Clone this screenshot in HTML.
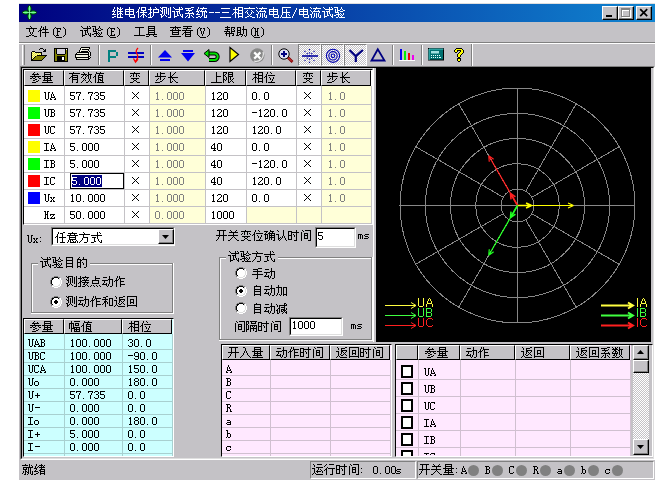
<!DOCTYPE html><html><head><meta charset="utf-8"><title>继电保护测试系统--三相交流电压/电流试验</title><style>
html,body{margin:0;padding:0;width:668px;height:486px;overflow:hidden;background:#fff;position:relative;font-family:"Liberation Sans",sans-serif}
div,svg,span{position:absolute;box-sizing:border-box}
svg{overflow:visible}
.g{shape-rendering:crispEdges}
.t{color:transparent;font:11px/13px "Liberation Sans",sans-serif;white-space:pre;overflow:hidden}
.t svg{left:0;top:0}
</style></head><body>

<div style="left:19px;top:3px;width:636px;height:477px;background:#c4c2c6"></div>
<div style="left:19px;top:3px;width:636px;height:1px;background:#dfdfdf"></div>
<div style="left:19px;top:4px;width:636px;height:18px;background:linear-gradient(to right,#000080,#1084d0)"></div>
<div class="t" style="left:112px;top:6px;width:234px;height:13px">继电保护测试系统--三相交流电压/电流试验<svg class="g" width="234" height="13"><path fill="#fff" d="M2 1h1v2h-1zM5 1h1v1h-1zM8 1h1v2h-1zM17 1h1v2h-1zM27 1h1v2h-1zM29 1h5v1h-5zM38 1h1v2h-1zM43 1h1v1h-1zM48 1h1v1h-1zM50 1h5v1h-5zM58 1h1v10h-1zM61 1h1v1h-1zM67 1h1v2h-1zM69 1h1v1h-1zM79 1h3v1h-3zM86 1h1v2h-1zM91 1h1v1h-1zM123 1h1v2h-1zM126 1h5v1h-5zM137 1h1v1h-1zM144 1h1v1h-1zM150 1h1v1h-1zM161 1h1v2h-1zM170 1h9v1h-9zM191 1h1v2h-1zM198 1h1v1h-1zM204 1h1v1h-1zM211 1h1v1h-1zM217 1h1v2h-1zM219 1h1v1h-1zM222 1h4v1h-4zM229 1h1v2h-1zM5 2h2v1h-2zM10 2h1v1h-1zM29 2h1v2h-1zM33 2h1v2h-1zM44 2h1v1h-1zM49 2h2v1h-2zM54 2h1v6h-1zM56 2h1v7h-1zM62 2h1v1h-1zM70 2h1v1h-1zM73 2h6v1h-6zM88 2h7v1h-7zM109 2h9v1h-9zM126 2h1v1h-1zM130 2h1v2h-1zM132 2h11v1h-11zM145 2h1v1h-1zM147 2h8v1h-8zM170 2h1v4h-1zM184 2h1v2h-1zM199 2h1v1h-1zM201 2h8v1h-8zM212 2h1v1h-1zM220 2h1v1h-1zM225 2h1v2h-1zM1 3h1v2h-1zM5 3h1v2h-1zM7 3h3v1h-3zM13 3h9v1h-9zM26 3h1v2h-1zM36 3h4v1h-4zM41 3h6v1h-6zM50 3h1v2h-1zM52 3h1v6h-1zM63 3h8v1h-8zM76 3h1v1h-1zM80 3h1v1h-1zM85 3h1v2h-1zM90 3h1v1h-1zM121 3h6v1h-6zM149 3h1v1h-1zM157 3h9v1h-9zM174 3h1v3h-1zM187 3h9v1h-9zM203 3h1v1h-1zM213 3h8v1h-8zM223 3h1v3h-1zM228 3h1v1h-1zM230 3h1v1h-1zM3 4h1v1h-1zM8 4h1v1h-1zM13 4h1v1h-1zM17 4h1v1h-1zM21 4h1v1h-1zM29 4h5v1h-5zM38 4h1v2h-1zM41 4h1v2h-1zM46 4h1v2h-1zM48 4h1v1h-1zM67 4h1v1h-1zM74 4h6v1h-6zM87 4h1v1h-1zM89 4h1v1h-1zM93 4h1v1h-1zM123 4h1v2h-1zM126 4h5v1h-5zM135 4h1v1h-1zM139 4h1v1h-1zM144 4h1v1h-1zM148 4h1v1h-1zM152 4h1v1h-1zM157 4h1v1h-1zM161 4h1v1h-1zM165 4h1v1h-1zM183 4h1v2h-1zM187 4h1v1h-1zM191 4h1v1h-1zM195 4h1v1h-1zM198 4h1v1h-1zM202 4h1v1h-1zM206 4h1v1h-1zM217 4h1v1h-1zM225 4h3v1h-3zM231 4h2v1h-2zM0 5h3v1h-3zM5 5h6v1h-6zM13 5h9v1h-9zM25 5h2v1h-2zM31 5h1v1h-1zM49 5h2v1h-2zM60 5h3v1h-3zM64 5h4v1h-4zM77 5h1v1h-1zM84 5h3v1h-3zM88 5h7v1h-7zM126 5h1v2h-1zM130 5h1v2h-1zM134 5h1v1h-1zM140 5h1v1h-1zM145 5h1v1h-1zM147 5h7v1h-7zM157 5h9v1h-9zM187 5h9v1h-9zM199 5h1v1h-1zM201 5h7v1h-7zM210 5h3v1h-3zM214 5h4v1h-4zM225 5h1v1h-1zM228 5h3v1h-3zM2 6h1v1h-1zM5 6h1v2h-1zM8 6h1v1h-1zM13 6h1v2h-1zM17 6h1v2h-1zM21 6h1v2h-1zM24 6h1v1h-1zM26 6h1v6h-1zM28 6h7v1h-7zM38 6h2v1h-2zM41 6h6v1h-6zM50 6h1v2h-1zM62 6h1v4h-1zM65 6h1v3h-1zM67 6h1v2h-1zM76 6h1v1h-1zM80 6h1v1h-1zM86 6h1v1h-1zM90 6h1v4h-1zM92 6h1v5h-1zM94 6h1v1h-1zM97 6h5v1h-5zM103 6h5v1h-5zM110 6h7v1h-7zM122 6h3v1h-3zM133 6h1v1h-1zM135 6h1v2h-1zM139 6h1v2h-1zM141 6h1v1h-1zM146 6h1v2h-1zM153 6h1v1h-1zM157 6h1v2h-1zM161 6h1v2h-1zM165 6h1v2h-1zM170 6h8v1h-8zM182 6h1v2h-1zM187 6h1v2h-1zM191 6h1v2h-1zM195 6h1v2h-1zM200 6h1v2h-1zM207 6h1v1h-1zM212 6h1v4h-1zM215 6h1v3h-1zM217 6h1v2h-1zM223 6h4v1h-4zM1 7h1v1h-1zM7 7h3v1h-3zM31 7h1v1h-1zM37 7h2v1h-2zM41 7h1v3h-1zM73 7h9v1h-9zM85 7h1v1h-1zM121 7h1v1h-1zM123 7h1v5h-1zM125 7h6v1h-6zM148 7h1v4h-1zM150 7h1v5h-1zM152 7h1v4h-1zM170 7h1v2h-1zM174 7h1v4h-1zM202 7h1v4h-1zM204 7h1v5h-1zM206 7h1v4h-1zM226 7h1v1h-1zM228 7h1v1h-1zM231 7h1v2h-1zM0 8h4v1h-4zM5 8h2v1h-2zM8 8h1v3h-1zM10 8h1v1h-1zM13 8h9v1h-9zM30 8h3v1h-3zM36 8h1v1h-1zM38 8h1v3h-1zM48 8h2v1h-2zM68 8h1v2h-1zM70 8h1v2h-1zM77 8h1v3h-1zM81 8h1v1h-1zM84 8h4v1h-4zM120 8h1v1h-1zM126 8h1v2h-1zM130 8h1v2h-1zM136 8h1v1h-1zM138 8h1v1h-1zM144 8h2v1h-2zM157 8h9v1h-9zM176 8h1v1h-1zM181 8h1v2h-1zM187 8h9v1h-9zM198 8h2v1h-2zM218 8h1v2h-1zM220 8h1v2h-1zM224 8h4v1h-4zM229 8h1v1h-1zM5 9h1v2h-1zM17 9h1v2h-1zM22 9h1v2h-1zM29 9h1v1h-1zM31 9h1v3h-1zM33 9h1v1h-1zM49 9h1v1h-1zM51 9h1v1h-1zM53 9h1v1h-1zM65 9h2v1h-2zM75 9h1v1h-1zM79 9h1v1h-1zM94 9h1v2h-1zM137 9h1v1h-1zM145 9h1v3h-1zM154 9h1v2h-1zM161 9h1v2h-1zM166 9h1v2h-1zM169 9h1v2h-1zM177 9h1v1h-1zM191 9h1v2h-1zM196 9h1v2h-1zM199 9h1v3h-1zM208 9h1v2h-1zM215 9h2v1h-2zM222 9h2v1h-2zM226 9h1v2h-1zM228 9h1v1h-1zM230 9h1v1h-1zM2 10h2v1h-2zM28 10h1v1h-1zM34 10h1v1h-1zM40 10h1v1h-1zM49 10h2v1h-2zM54 10h1v1h-1zM62 10h3v1h-3zM69 10h2v1h-2zM74 10h1v1h-1zM80 10h1v1h-1zM86 10h2v1h-2zM89 10h1v1h-1zM126 10h5v1h-5zM135 10h2v1h-2zM138 10h2v1h-2zM180 10h1v2h-1zM212 10h3v1h-3zM219 10h2v1h-2zM229 10h1v1h-1zM0 11h2v1h-2zM5 11h6v1h-6zM18 11h5v1h-5zM36 11h4v1h-4zM49 11h1v1h-1zM56 11h3v1h-3zM62 11h1v1h-1zM70 11h1v1h-1zM73 11h1v1h-1zM76 11h2v1h-2zM81 11h1v1h-1zM84 11h2v1h-2zM88 11h1v1h-1zM92 11h3v1h-3zM108 11h11v1h-11zM126 11h1v1h-1zM130 11h1v1h-1zM133 11h2v1h-2zM140 11h3v1h-3zM147 11h1v1h-1zM153 11h2v1h-2zM162 11h5v1h-5zM168 11h1v1h-1zM170 11h9v1h-9zM192 11h5v1h-5zM201 11h1v1h-1zM207 11h2v1h-2zM212 11h1v1h-1zM220 11h1v1h-1zM224 11h2v1h-2zM227 11h6v1h-6z"/></svg></div>
<svg style="left:21px;top:4px" width="17" height="17" viewBox="0 0 17 17"><g fill="#28e848" stroke="#003800" stroke-width="0.9"><path d="M8.5 1C10.8 3.5 10.8 6 8.5 8.5C6.2 6 6.2 3.5 8.5 1Z"/><path d="M8.5 8.5C10.8 11 10.8 13.5 8.5 16C6.2 13.5 6.2 11 8.5 8.5Z"/><path d="M1 8.5C3.5 6.2 6 6.2 8.5 8.5C6 10.8 3.5 10.8 1 8.5Z"/><path d="M8.5 8.5C11 6.2 13.5 6.2 16 8.5C13.5 10.8 11 10.8 8.5 8.5Z"/></g><path d="M8.5 2V15M2 8.5H15" stroke="#a0ffc0" stroke-width="0.7"/></svg>
<div style="left:602px;top:6px;width:16px;height:14px;background:#c4c2c6;border-top:1px solid #fff;border-left:1px solid #fff;border-right:1px solid #000;border-bottom:1px solid #000"></div>
<div style="left:603px;top:7px;width:14px;height:12px;border-right:1px solid #808080;border-bottom:1px solid #808080"></div>
<div style="left:618px;top:6px;width:16px;height:14px;background:#c4c2c6;border-top:1px solid #fff;border-left:1px solid #fff;border-right:1px solid #000;border-bottom:1px solid #000"></div>
<div style="left:619px;top:7px;width:14px;height:12px;border-right:1px solid #808080;border-bottom:1px solid #808080"></div>
<div style="left:636px;top:6px;width:16px;height:14px;background:#c4c2c6;border-top:1px solid #fff;border-left:1px solid #fff;border-right:1px solid #000;border-bottom:1px solid #000"></div>
<div style="left:637px;top:7px;width:14px;height:12px;border-right:1px solid #808080;border-bottom:1px solid #808080"></div>
<svg style="left:602px;top:6px" width="16" height="14" viewBox="0 0 16 14"><rect x="4" y="9" width="6" height="2" fill="#000"/></svg>
<svg style="left:618px;top:6px" width="16" height="14" viewBox="0 0 16 14"><g fill="none" stroke="#fff" shape-rendering="crispEdges"><rect x="4.5" y="4.5" width="8" height="7"/></g><g fill="none" stroke="#808080" shape-rendering="crispEdges"><rect x="3.5" y="3.5" width="8" height="7"/><path d="M3 2.5H12"/></g></svg>
<svg style="left:636px;top:6px" width="16" height="14" viewBox="0 0 16 14"><path d="M4.2 3.2L11.2 10.2M11.2 3.2L4.2 10.2" stroke="#000" stroke-width="1.7"/></svg>
<div class="t" style="left:26px;top:25px;width:42px;height:13px">文件(F)<svg class="g" width="42" height="13"><path fill="#000" d="M4 1h1v1h-1zM15 1h1v2h-1zM19 1h1v3h-1zM5 2h1v1h-1zM17 2h1v2h-1zM29 2h1v1h-1zM37 2h1v1h-1zM0 3h11v1h-11zM14 3h1v2h-1zM28 3h1v1h-1zM30 3h5v1h-5zM38 3h1v1h-1zM3 4h1v3h-1zM7 4h1v3h-1zM16 4h6v1h-6zM27 4h1v6h-1zM31 4h1v2h-1zM34 4h1v1h-1zM39 4h1v6h-1zM13 5h3v1h-3zM19 5h1v2h-1zM12 6h1v1h-1zM14 6h1v6h-1zM31 6h3v1h-3zM4 7h1v2h-1zM6 7h1v2h-1zM16 7h7v1h-7zM31 7h1v3h-1zM19 8h1v4h-1zM5 9h1v1h-1zM3 10h2v1h-2zM6 10h2v1h-2zM28 10h1v1h-1zM30 10h3v1h-3zM38 10h1v1h-1zM0 11h3v1h-3zM8 11h3v1h-3zM29 11h1v1h-1zM37 11h1v1h-1z"/></svg></div>
<div class="t" style="left:80px;top:25px;width:42px;height:13px">试验(E)<svg class="g" width="42" height="13"><path fill="#000" d="M1 1h1v1h-1zM7 1h1v2h-1zM9 1h1v1h-1zM12 1h4v1h-4zM19 1h1v2h-1zM2 2h1v1h-1zM10 2h1v1h-1zM15 2h1v2h-1zM29 2h1v1h-1zM37 2h1v1h-1zM3 3h8v1h-8zM13 3h1v3h-1zM18 3h1v1h-1zM20 3h1v1h-1zM28 3h1v1h-1zM30 3h5v1h-5zM38 3h1v1h-1zM7 4h1v1h-1zM15 4h3v1h-3zM21 4h2v1h-2zM27 4h1v6h-1zM31 4h1v2h-1zM34 4h1v1h-1zM39 4h1v6h-1zM0 5h3v1h-3zM4 5h4v1h-4zM15 5h1v1h-1zM18 5h3v1h-3zM2 6h1v4h-1zM5 6h1v3h-1zM7 6h1v2h-1zM13 6h4v1h-4zM31 6h3v1h-3zM16 7h1v1h-1zM18 7h1v1h-1zM21 7h1v2h-1zM31 7h1v3h-1zM8 8h1v2h-1zM10 8h1v2h-1zM14 8h4v1h-4zM19 8h1v1h-1zM5 9h2v1h-2zM12 9h2v1h-2zM16 9h1v2h-1zM18 9h1v1h-1zM20 9h1v1h-1zM34 9h1v1h-1zM2 10h3v1h-3zM9 10h2v1h-2zM19 10h1v1h-1zM28 10h1v1h-1zM30 10h5v1h-5zM38 10h1v1h-1zM2 11h1v1h-1zM10 11h1v1h-1zM14 11h2v1h-2zM17 11h6v1h-6zM29 11h1v1h-1zM37 11h1v1h-1z"/></svg></div>
<div class="t" style="left:134px;top:25px;width:24px;height:13px">工具<svg class="g" width="24" height="13"><path fill="#000" d="M14 1h7v1h-7zM1 2h9v1h-9zM14 2h1v1h-1zM20 2h1v1h-1zM5 3h1v7h-1zM14 3h7v1h-7zM14 4h1v1h-1zM20 4h1v1h-1zM14 5h7v1h-7zM14 6h1v1h-1zM20 6h1v1h-1zM14 7h7v1h-7zM14 8h1v1h-1zM20 8h1v1h-1zM12 9h11v1h-11zM0 10h11v1h-11zM15 10h1v1h-1zM19 10h1v1h-1zM12 11h3v1h-3zM20 11h3v1h-3z"/></svg></div>
<div class="t" style="left:170px;top:25px;width:42px;height:13px">查看(V)<svg class="g" width="42" height="13"><path fill="#000" d="M5 1h1v1h-1zM13 1h9v1h-9zM0 2h11v1h-11zM17 2h1v1h-1zM29 2h1v1h-1zM37 2h1v1h-1zM3 3h1v1h-1zM5 3h1v2h-1zM7 3h1v1h-1zM13 3h8v1h-8zM28 3h1v1h-1zM30 3h2v1h-2zM33 3h2v1h-2zM38 3h1v1h-1zM2 4h1v1h-1zM8 4h1v1h-1zM16 4h1v1h-1zM27 4h1v6h-1zM30 4h1v2h-1zM34 4h1v2h-1zM39 4h1v6h-1zM0 5h11v1h-11zM12 5h11v1h-11zM2 6h1v1h-1zM8 6h1v1h-1zM15 6h1v1h-1zM20 6h1v1h-1zM31 6h1v3h-1zM33 6h1v3h-1zM2 7h7v1h-7zM14 7h7v1h-7zM2 8h1v1h-1zM8 8h1v1h-1zM13 8h1v1h-1zM15 8h1v1h-1zM20 8h1v1h-1zM2 9h7v1h-7zM12 9h1v1h-1zM15 9h6v1h-6zM32 9h1v2h-1zM15 10h1v1h-1zM20 10h1v1h-1zM28 10h1v1h-1zM38 10h1v1h-1zM0 11h11v1h-11zM15 11h6v1h-6zM29 11h1v1h-1zM37 11h1v1h-1z"/></svg></div>
<div class="t" style="left:224px;top:25px;width:42px;height:13px">帮助(H)<svg class="g" width="42" height="13"><path fill="#000" d="M3 1h1v1h-1zM19 1h1v3h-1zM1 2h5v1h-5zM7 2h4v1h-4zM13 2h4v1h-4zM29 2h1v1h-1zM37 2h1v1h-1zM3 3h1v1h-1zM7 3h1v3h-1zM10 3h1v1h-1zM13 3h1v2h-1zM16 3h1v2h-1zM28 3h1v1h-1zM30 3h2v1h-2zM33 3h2v1h-2zM38 3h1v1h-1zM1 4h5v1h-5zM9 4h1v1h-1zM18 4h5v1h-5zM27 4h1v6h-1zM31 4h1v2h-1zM33 4h1v2h-1zM39 4h1v6h-1zM3 5h1v1h-1zM10 5h1v1h-1zM13 5h4v1h-4zM19 5h1v4h-1zM22 5h1v6h-1zM0 6h6v1h-6zM7 6h4v1h-4zM13 6h1v1h-1zM16 6h1v1h-1zM31 6h3v1h-3zM2 7h1v1h-1zM5 7h1v1h-1zM7 7h1v1h-1zM13 7h4v1h-4zM31 7h1v3h-1zM33 7h1v3h-1zM1 8h9v1h-9zM13 8h1v2h-1zM16 8h1v1h-1zM2 9h1v2h-1zM5 9h1v3h-1zM9 9h1v1h-1zM15 9h4v1h-4zM8 10h2v1h-2zM12 10h3v1h-3zM18 10h1v1h-1zM20 10h1v1h-1zM28 10h1v1h-1zM30 10h2v1h-2zM33 10h2v1h-2zM38 10h1v1h-1zM17 11h1v1h-1zM21 11h1v1h-1zM29 11h1v1h-1zM37 11h1v1h-1z"/></svg></div>
<div style="left:56px;top:37px;width:6px;height:1px;background:#000"></div>
<div style="left:110px;top:37px;width:6px;height:1px;background:#000"></div>
<div style="left:200px;top:37px;width:6px;height:1px;background:#000"></div>
<div style="left:254px;top:37px;width:6px;height:1px;background:#000"></div>
<div style="left:19px;top:42px;width:636px;height:1px;background:#808080"></div>
<div style="left:19px;top:43px;width:636px;height:1px;background:#fff"></div>
<div style="left:22px;top:45px;width:3px;height:20px;border-left:1px solid #fff;border-right:1px solid #808080"></div>
<div style="left:98px;top:45px;width:2px;height:20px;border-left:1px solid #808080;border-right:1px solid #fff"></div>
<div style="left:150px;top:45px;width:2px;height:20px;border-left:1px solid #808080;border-right:1px solid #fff"></div>
<div style="left:271px;top:45px;width:2px;height:20px;border-left:1px solid #808080;border-right:1px solid #fff"></div>
<div style="left:392px;top:45px;width:2px;height:20px;border-left:1px solid #808080;border-right:1px solid #fff"></div>
<div style="left:421px;top:45px;width:2px;height:20px;border-left:1px solid #808080;border-right:1px solid #fff"></div>
<div style="left:298px;top:44px;width:23px;height:22px;border-top:1px solid #808080;border-left:1px solid #808080;border-right:1px solid #fff;border-bottom:1px solid #fff;background-color:#e0e0e0;background-image:repeating-conic-gradient(#c4c2c6 0 25%,#fff 0 50%);background-size:2px 2px"></div>
<div style="left:321px;top:44px;width:23px;height:22px;border-top:1px solid #808080;border-left:1px solid #808080;border-right:1px solid #fff;border-bottom:1px solid #fff;background-color:#e0e0e0;background-image:repeating-conic-gradient(#c4c2c6 0 25%,#fff 0 50%);background-size:2px 2px"></div>
<div style="left:344px;top:44px;width:23px;height:22px;border-top:1px solid #808080;border-left:1px solid #808080;border-right:1px solid #fff;border-bottom:1px solid #fff;background-color:#e0e0e0;background-image:repeating-conic-gradient(#c4c2c6 0 25%,#fff 0 50%);background-size:2px 2px"></div>
<svg class="g" style="left:31px;top:47px" width="16" height="14"><path fill="#000" d="M9 1h3v1h-3zM8 2h1v1h-1zM12 2h1v1h-1zM14 2h1v1h-1zM13 3h2v1h-2zM1 4h3v1h-3zM12 4h3v1h-3zM0 5h1v1h-1zM4 5h7v1h-7zM0 6h1v1h-1zM10 6h1v1h-1zM0 7h1v1h-1zM10 7h1v1h-1zM0 8h1v1h-1zM6 8h10v1h-10zM0 9h1v1h-1zM4 9h1v1h-1zM14 9h1v1h-1zM0 10h1v1h-1zM3 10h1v1h-1zM13 10h1v1h-1zM0 11h1v1h-1zM2 11h1v1h-1zM12 11h1v1h-1zM0 12h2v1h-2zM11 12h1v1h-1zM0 13h11v1h-11z"/><path fill="#ffffa0" d="M1 5h1v1h-1zM3 5h1v1h-1zM2 6h1v1h-1zM4 6h1v1h-1zM6 6h1v1h-1zM8 6h1v1h-1zM1 7h1v1h-1zM3 7h1v1h-1zM5 7h1v1h-1zM7 7h1v1h-1zM9 7h1v1h-1zM2 8h1v1h-1zM4 8h1v1h-1zM1 9h1v1h-1zM3 9h1v1h-1zM2 10h1v1h-1zM1 11h1v1h-1z"/><path fill="#e0e040" d="M2 5h1v1h-1zM1 6h1v1h-1zM3 6h1v1h-1zM5 6h1v1h-1zM7 6h1v1h-1zM9 6h1v1h-1zM2 7h1v1h-1zM4 7h1v1h-1zM6 7h1v1h-1zM8 7h1v1h-1zM1 8h1v1h-1zM3 8h1v1h-1zM5 8h1v1h-1zM2 9h1v1h-1zM1 10h1v1h-1z"/><path fill="#808000" d="M5 9h9v1h-9zM4 10h9v1h-9zM3 11h9v1h-9zM2 12h9v1h-9z"/></svg>
<svg class="g" style="left:54px;top:48px" width="14" height="14"><path fill="#000" d="M0 0h14v1h-14zM0 1h1v1h-1zM2 1h1v1h-1zM11 1h1v1h-1zM13 1h1v1h-1zM0 2h1v1h-1zM2 2h1v1h-1zM11 2h1v1h-1zM13 2h1v1h-1zM0 3h1v1h-1zM2 3h1v1h-1zM11 3h1v1h-1zM13 3h1v1h-1zM0 4h1v1h-1zM2 4h1v1h-1zM11 4h1v1h-1zM13 4h1v1h-1zM0 5h1v1h-1zM2 5h1v1h-1zM11 5h1v1h-1zM13 5h1v1h-1zM0 6h1v1h-1zM3 6h8v1h-8zM13 6h1v1h-1zM0 7h1v1h-1zM13 7h1v1h-1zM0 8h1v1h-1zM3 8h8v1h-8zM13 8h1v1h-1zM0 9h1v1h-1zM3 9h5v1h-5zM10 9h1v1h-1zM13 9h1v1h-1zM0 10h1v1h-1zM3 10h5v1h-5zM10 10h1v1h-1zM13 10h1v1h-1zM0 11h1v1h-1zM3 11h5v1h-5zM10 11h1v1h-1zM13 11h1v1h-1zM0 12h1v1h-1zM3 12h8v1h-8zM13 12h1v1h-1zM0 13h14v1h-14z"/><path fill="#808000" d="M1 1h1v1h-1zM1 2h1v1h-1zM12 2h1v1h-1zM1 3h1v1h-1zM12 3h1v1h-1zM1 4h1v1h-1zM12 4h1v1h-1zM1 5h1v1h-1zM12 5h1v1h-1zM1 6h2v1h-2zM11 6h2v1h-2zM1 7h12v1h-12zM1 8h2v1h-2zM11 8h2v1h-2zM1 9h2v1h-2zM11 9h2v1h-2zM1 10h2v1h-2zM11 10h2v1h-2zM1 11h2v1h-2zM11 11h2v1h-2zM1 12h2v1h-2zM11 12h2v1h-2z"/><path fill="#d4d0dc" d="M3 1h8v1h-8zM3 2h8v1h-8zM3 3h8v1h-8zM3 4h8v1h-8zM3 5h8v1h-8z"/><path fill="#fff" d="M12 1h1v1h-1zM8 9h2v1h-2zM8 10h2v1h-2zM8 11h2v1h-2z"/></svg>
<svg class="g" style="left:75px;top:47px" width="16" height="13"><path fill="#000" d="M6 0h9v1h-9zM5 1h1v1h-1zM14 1h1v1h-1zM5 2h1v1h-1zM7 2h7v1h-7zM4 3h1v1h-1zM13 3h1v1h-1zM4 4h1v1h-1zM6 4h7v1h-7zM14 4h1v1h-1zM2 5h12v1h-12zM15 5h1v1h-1zM1 6h1v1h-1zM13 6h1v1h-1zM15 6h1v1h-1zM0 7h14v1h-14zM15 7h1v1h-1zM0 8h1v1h-1zM13 8h1v1h-1zM15 8h1v1h-1zM0 9h1v1h-1zM13 9h2v1h-2zM0 10h14v1h-14zM15 10h1v1h-1zM1 11h1v1h-1zM13 11h2v1h-2zM1 12h13v1h-13z"/><path fill="#f0f0e0" d="M6 1h8v1h-8zM6 2h1v1h-1zM5 3h8v1h-8zM5 4h1v1h-1zM13 4h1v1h-1zM14 5h1v1h-1zM2 6h11v1h-11zM14 6h1v1h-1zM14 7h1v1h-1zM1 8h12v1h-12zM14 8h1v1h-1zM1 9h12v1h-12zM14 10h1v1h-1zM2 11h11v1h-11z"/></svg>
<svg style="left:104px;top:47px" width="16" height="16" viewBox="0 0 16 16"><path fill="#008080" d="M4 3h8v2h-8zM4 5h2v10h-2zM12 5h2v4h-2zM6 9h6v2h-6z"/></svg>
<svg style="left:127px;top:47px" width="18" height="16" viewBox="0 0 18 16"><path fill="#0000c0" d="M1 5h16v2h-16zM1 9h16v2h-16z"/><path d="M11 1Q8 4 10 7Q12 10 8.5 14.5" stroke="#f00" stroke-width="1.3" fill="none"/><path d="M6.5 11.5L8.5 15L11 12" stroke="#f00" stroke-width="1.3" fill="none"/></svg>
<svg style="left:157px;top:47px" width="16" height="16" viewBox="0 0 16 16"><path fill="#0000f0" d="M1 10.5L8 3L15 10.5z"/><rect x="3" y="12" width="10" height="2" fill="#0000f0"/></svg>
<svg style="left:180px;top:47px" width="16" height="16" viewBox="0 0 16 16"><path fill="#0000f0" d="M1 6L15 6L8 14.5z"/><rect x="3" y="3" width="10" height="2" fill="#0000f0"/></svg>
<svg style="left:203px;top:47px" width="17" height="16" viewBox="0 0 17 16"><path d="M6 6.5H11.5A3.2 3.2 0 0 1 11.5 12.9H6" stroke="#000" stroke-width="4" fill="none"/><path d="M6 6.5H11.5A3.2 3.2 0 0 1 11.5 12.9H6" stroke="#00e000" stroke-width="2" fill="none"/><path d="M1 6.5L6 2.5V10.5Z" fill="#00e000" stroke="#000" stroke-width="1"/></svg>
<svg style="left:228px;top:46px" width="12" height="17" viewBox="0 0 12 17"><path d="M2 1.5V15.5L10.5 8.5Z" fill="#ffff00" stroke="#000" stroke-width="1.2"/></svg>
<svg style="left:249px;top:47px" width="17" height="17" viewBox="0 0 17 17"><circle cx="8.3" cy="8.5" r="7.2" fill="#888"/><path d="M14 5A7.2 7.2 0 0 1 5 14" stroke="#e8e8e8" stroke-width="1.2" fill="none"/><path d="M5.2 5.4L11.4 11.6M11.4 5.4L5.2 11.6" stroke="#fff" stroke-width="2.2"/></svg>
<svg style="left:277px;top:47px" width="17" height="17" viewBox="0 0 17 17"><path d="M10.5 10L15.5 15" stroke="#800000" stroke-width="2.6"/><path d="M11 10.5L15 14.5" stroke="#ff6060" stroke-width="0.8"/><circle cx="7" cy="7" r="5.2" fill="#e0e0f4" stroke="#000" stroke-width="1"/><path fill="#000080" d="M6 4h2v6h-2zM4 6h6v2h-6z"/></svg>
<svg style="left:299px;top:45px" width="21" height="20" viewBox="0 0 21 20"><path d="M3 11H19" stroke="#0000a0" stroke-width="1.6"/><path d="M10.5 4V18M5.5 6L15.5 16M15.5 6L5.5 16" stroke="#0000a0" stroke-width="1.2" stroke-dasharray="1.2 2" fill="none"/></svg>
<svg style="left:322px;top:45px" width="21" height="20" viewBox="0 0 21 20"><g stroke="#0000b0" fill="none" stroke-width="1.1"><circle cx="11" cy="10.8" r="6.6"/><circle cx="11" cy="10.8" r="4.2"/><circle cx="11" cy="10.8" r="1.8"/></g></svg>
<svg style="left:345px;top:45px" width="21" height="20" viewBox="0 0 21 20"><path d="M4.5 5L10.8 11.2L17.9 5M10.8 11.2V17" stroke="#000080" stroke-width="2.2" fill="none"/></svg>
<svg style="left:369px;top:46px" width="18" height="17" viewBox="0 0 18 17"><path d="M8.8 3.2L2.5 14.5H15.5Z" stroke="#000080" stroke-width="1.8" fill="none" stroke-linejoin="miter"/></svg>
<svg style="left:398px;top:47px" width="18" height="16" viewBox="0 0 18 16"><rect x="2" y="2" width="2" height="11" fill="#0000f0"/><rect x="6" y="4" width="2" height="9" fill="#00f000"/><rect x="10" y="6" width="2" height="7" fill="#f00000"/><rect x="14" y="8" width="2" height="5" fill="#f000f0"/><rect x="1" y="13" width="16" height="1" fill="#fff"/></svg>
<svg style="left:428px;top:48px" width="17" height="14" viewBox="0 0 17 14"><rect x="0.5" y="0.5" width="15" height="11.5" fill="#007070" stroke="#000"/><path d="M1 1H15.5" stroke="#50d0d0"/><path d="M1 1V12" stroke="#50d0d0"/><rect x="3" y="3" width="8" height="2.5" fill="#a0e0e0"/><g fill="#e0ffff"><rect x="3" y="7" width="1" height="1"/><rect x="5" y="7" width="1" height="1"/><rect x="7" y="7" width="1" height="1"/><rect x="9" y="7" width="1" height="1"/><rect x="11" y="7" width="1" height="1"/><rect x="3" y="9" width="1" height="1"/><rect x="5" y="9" width="1" height="1"/><rect x="7" y="9" width="1" height="1"/><rect x="9" y="9" width="1" height="1"/><rect x="11" y="9" width="2" height="1"/></g></svg>
<svg class="g" style="left:454px;top:48px" width="10" height="14"><path fill="#000" d="M2 0h6v1h-6zM1 1h1v1h-1zM8 1h1v1h-1zM0 2h1v1h-1zM3 2h4v1h-4zM9 2h1v1h-1zM0 3h1v1h-1zM3 3h1v1h-1zM6 3h1v1h-1zM9 3h1v1h-1zM1 4h2v1h-2zM5 4h1v1h-1zM9 4h1v1h-1zM4 5h1v1h-1zM8 5h1v1h-1zM3 6h1v1h-1zM7 6h1v1h-1zM3 7h1v1h-1zM6 7h1v1h-1zM3 8h1v1h-1zM6 8h1v1h-1zM4 9h2v1h-2zM3 10h4v1h-4zM3 11h1v1h-1zM6 11h1v1h-1zM3 12h1v1h-1zM6 12h1v1h-1zM4 13h2v1h-2z"/><path fill="#ffff00" d="M2 1h6v1h-6zM1 2h2v1h-2zM7 2h2v1h-2zM1 3h2v1h-2zM7 3h2v1h-2zM6 4h3v1h-3zM5 5h3v1h-3zM4 6h3v1h-3zM4 7h2v1h-2zM4 8h2v1h-2zM4 11h2v1h-2zM4 12h2v1h-2z"/></svg>
<div style="left:471px;top:44px;width:2px;height:22px;border-left:1px solid #808080;border-right:1px solid #fff"></div>
<div style="left:20px;top:66px;width:635px;height:394px;border-left:1px solid #808080;border-top:1px solid #808080;border-right:1px solid #fff;border-bottom:1px solid #fff"></div>
<div style="left:21px;top:67px;width:633px;height:392px;border-left:1px solid #000;border-top:1px solid #000;border-right:1px solid #dfdfdf;border-bottom:1px solid #dfdfdf"></div>
<div style="left:23px;top:69px;width:350px;height:156px;background:#fff;border-left:1px solid #000;border-top:1px solid #000;border-right:1px solid #fff;border-bottom:1px solid #fff"></div>
<div style="left:24px;top:70px;width:40px;height:16px;background:#c4c2c6;border-left:1px solid #fff;border-top:1px solid #fff;border-right:1px solid #000;border-bottom:1px solid #000"></div>
<div class="t" style="left:30px;top:71px;width:24px;height:13px">参量<svg class="g" width="24" height="13"><path fill="#000" d="M4 1h1v1h-1zM14 1h7v1h-7zM3 2h1v1h-1zM7 2h1v1h-1zM14 2h1v1h-1zM20 2h1v1h-1zM2 3h7v1h-7zM14 3h7v1h-7zM4 4h1v1h-1zM14 4h1v1h-1zM20 4h1v1h-1zM0 5h11v1h-11zM12 5h11v1h-11zM2 6h1v1h-1zM5 6h1v1h-1zM8 6h1v1h-1zM14 6h1v1h-1zM17 6h1v1h-1zM20 6h1v1h-1zM0 7h2v1h-2zM3 7h2v1h-2zM9 7h2v1h-2zM14 7h7v1h-7zM5 8h2v1h-2zM14 8h1v1h-1zM17 8h1v1h-1zM20 8h1v1h-1zM3 9h2v1h-2zM8 9h1v1h-1zM13 9h9v1h-9zM6 10h2v1h-2zM17 10h1v1h-1zM2 11h4v1h-4zM12 11h11v1h-11z"/></svg></div>
<div style="left:64px;top:70px;width:60px;height:16px;background:#c4c2c6;border-left:1px solid #fff;border-top:1px solid #fff;border-right:1px solid #000;border-bottom:1px solid #000"></div>
<div class="t" style="left:69px;top:71px;width:36px;height:13px">有效值<svg class="g" width="36" height="13"><path fill="#000" d="M4 1h1v1h-1zM14 1h1v1h-1zM19 1h1v2h-1zM27 1h1v1h-1zM31 1h1v1h-1zM0 2h11v1h-11zM15 2h1v1h-1zM27 2h8v1h-8zM3 3h1v1h-1zM12 3h6v1h-6zM19 3h4v1h-4zM26 3h1v2h-1zM30 3h1v1h-1zM3 4h6v1h-6zM14 4h1v1h-1zM16 4h1v1h-1zM18 4h2v1h-2zM21 4h1v4h-1zM29 4h5v1h-5zM2 5h2v1h-2zM8 5h1v1h-1zM13 5h1v1h-1zM17 5h1v1h-1zM19 5h1v3h-1zM25 5h2v1h-2zM29 5h1v1h-1zM33 5h1v1h-1zM1 6h1v1h-1zM3 6h6v1h-6zM12 6h1v1h-1zM16 6h1v2h-1zM24 6h1v1h-1zM26 6h1v6h-1zM29 6h5v1h-5zM0 7h1v1h-1zM3 7h1v1h-1zM8 7h1v1h-1zM14 7h1v1h-1zM29 7h1v1h-1zM33 7h1v2h-1zM3 8h6v1h-6zM15 8h1v1h-1zM20 8h1v2h-1zM29 8h3v1h-3zM3 9h1v3h-1zM8 9h1v2h-1zM14 9h1v1h-1zM16 9h1v1h-1zM29 9h1v2h-1zM31 9h3v1h-3zM13 10h1v1h-1zM19 10h1v1h-1zM21 10h1v1h-1zM33 10h1v1h-1zM7 11h2v1h-2zM12 11h1v1h-1zM17 11h2v1h-2zM22 11h1v1h-1zM28 11h7v1h-7z"/></svg></div>
<div style="left:124px;top:70px;width:25px;height:16px;background:#c4c2c6;border-left:1px solid #fff;border-top:1px solid #fff;border-right:1px solid #000;border-bottom:1px solid #000"></div>
<div class="t" style="left:129px;top:71px;width:12px;height:13px">变<svg class="g" width="12" height="13"><path fill="#000" d="M5 1h1v1h-1zM1 2h10v1h-10zM4 3h1v3h-1zM7 3h1v3h-1zM2 4h1v1h-1zM9 4h1v1h-1zM1 5h1v1h-1zM10 5h1v1h-1zM2 7h8v1h-8zM4 8h1v1h-1zM7 8h1v1h-1zM5 9h2v1h-2zM4 10h1v1h-1zM7 10h1v1h-1zM1 11h3v1h-3zM8 11h3v1h-3z"/></svg></div>
<div style="left:149px;top:70px;width:56px;height:16px;background:#c4c2c6;border-left:1px solid #fff;border-top:1px solid #fff;border-right:1px solid #000;border-bottom:1px solid #000"></div>
<div class="t" style="left:155px;top:71px;width:24px;height:13px">步长<svg class="g" width="24" height="13"><path fill="#000" d="M5 1h1v1h-1zM15 1h1v4h-1zM20 1h1v1h-1zM2 2h1v3h-1zM5 2h5v1h-5zM19 2h1v1h-1zM5 3h1v2h-1zM18 3h1v1h-1zM17 4h1v1h-1zM0 5h11v1h-11zM15 5h2v1h-2zM5 6h1v3h-1zM13 6h10v1h-10zM3 7h1v1h-1zM9 7h1v1h-1zM15 7h1v4h-1zM17 7h1v1h-1zM2 8h1v1h-1zM8 8h1v1h-1zM18 8h1v1h-1zM1 9h1v1h-1zM7 9h1v1h-1zM19 9h1v1h-1zM5 10h2v1h-2zM17 10h1v1h-1zM20 10h1v1h-1zM0 11h5v1h-5zM15 11h2v1h-2zM21 11h2v1h-2z"/></svg></div>
<div style="left:205px;top:70px;width:41px;height:16px;background:#c4c2c6;border-left:1px solid #fff;border-top:1px solid #fff;border-right:1px solid #000;border-bottom:1px solid #000"></div>
<div class="t" style="left:211px;top:71px;width:24px;height:13px">上限<svg class="g" width="24" height="13"><path fill="#000" d="M5 1h1v4h-1zM12 1h4v1h-4zM17 1h5v1h-5zM12 2h1v2h-1zM15 2h1v1h-1zM17 2h1v1h-1zM21 2h1v1h-1zM14 3h1v1h-1zM17 3h5v1h-5zM12 4h2v1h-2zM17 4h1v1h-1zM21 4h1v1h-1zM5 5h5v1h-5zM12 5h1v3h-1zM14 5h1v1h-1zM17 5h5v1h-5zM5 6h1v5h-1zM15 6h1v3h-1zM17 6h1v5h-1zM19 6h1v3h-1zM22 7h1v1h-1zM12 8h2v1h-2zM21 8h1v1h-1zM12 9h1v3h-1zM14 9h1v1h-1zM20 9h1v1h-1zM19 10h1v1h-1zM21 10h1v1h-1zM0 11h11v1h-11zM17 11h2v1h-2zM22 11h1v1h-1z"/></svg></div>
<div style="left:246px;top:70px;width:50px;height:16px;background:#c4c2c6;border-left:1px solid #fff;border-top:1px solid #fff;border-right:1px solid #000;border-bottom:1px solid #000"></div>
<div class="t" style="left:252px;top:71px;width:24px;height:13px">相位<svg class="g" width="24" height="13"><path fill="#000" d="M3 1h1v2h-1zM6 1h5v1h-5zM15 1h1v2h-1zM18 1h1v1h-1zM6 2h1v1h-1zM10 2h1v2h-1zM19 2h1v1h-1zM1 3h6v1h-6zM14 3h1v2h-1zM3 4h1v2h-1zM6 4h5v1h-5zM16 4h7v1h-7zM6 5h1v2h-1zM10 5h1v2h-1zM13 5h2v1h-2zM2 6h3v1h-3zM12 6h1v1h-1zM14 6h1v6h-1zM17 6h1v1h-1zM21 6h1v2h-1zM1 7h1v1h-1zM3 7h1v5h-1zM5 7h6v1h-6zM18 7h1v2h-1zM0 8h1v1h-1zM6 8h1v2h-1zM10 8h1v2h-1zM20 8h1v2h-1zM6 10h5v1h-5zM19 10h1v1h-1zM6 11h1v1h-1zM10 11h1v1h-1zM16 11h7v1h-7z"/></svg></div>
<div style="left:296px;top:70px;width:25px;height:16px;background:#c4c2c6;border-left:1px solid #fff;border-top:1px solid #fff;border-right:1px solid #000;border-bottom:1px solid #000"></div>
<div class="t" style="left:302px;top:71px;width:12px;height:13px">变<svg class="g" width="12" height="13"><path fill="#000" d="M5 1h1v1h-1zM1 2h10v1h-10zM4 3h1v3h-1zM7 3h1v3h-1zM2 4h1v1h-1zM9 4h1v1h-1zM1 5h1v1h-1zM10 5h1v1h-1zM2 7h8v1h-8zM4 8h1v1h-1zM7 8h1v1h-1zM5 9h2v1h-2zM4 10h1v1h-1zM7 10h1v1h-1zM1 11h3v1h-3zM8 11h3v1h-3z"/></svg></div>
<div style="left:321px;top:70px;width:50px;height:16px;background:#c4c2c6;border-left:1px solid #fff;border-top:1px solid #fff;border-right:1px solid #000;border-bottom:1px solid #000"></div>
<div class="t" style="left:327px;top:71px;width:24px;height:13px">步长<svg class="g" width="24" height="13"><path fill="#000" d="M5 1h1v1h-1zM15 1h1v4h-1zM20 1h1v1h-1zM2 2h1v3h-1zM5 2h5v1h-5zM19 2h1v1h-1zM5 3h1v2h-1zM18 3h1v1h-1zM17 4h1v1h-1zM0 5h11v1h-11zM15 5h2v1h-2zM5 6h1v3h-1zM13 6h10v1h-10zM3 7h1v1h-1zM9 7h1v1h-1zM15 7h1v4h-1zM17 7h1v1h-1zM2 8h1v1h-1zM8 8h1v1h-1zM18 8h1v1h-1zM1 9h1v1h-1zM7 9h1v1h-1zM19 9h1v1h-1zM5 10h2v1h-2zM17 10h1v1h-1zM20 10h1v1h-1zM0 11h5v1h-5zM15 11h2v1h-2zM21 11h2v1h-2z"/></svg></div>
<div style="left:64px;top:86px;width:1px;height:138px;background:#c4c2c6"></div>
<div style="left:124px;top:86px;width:1px;height:138px;background:#c4c2c6"></div>
<div style="left:149px;top:86px;width:1px;height:138px;background:#c4c2c6"></div>
<div style="left:205px;top:86px;width:1px;height:138px;background:#c4c2c6"></div>
<div style="left:246px;top:86px;width:1px;height:138px;background:#c4c2c6"></div>
<div style="left:296px;top:86px;width:1px;height:138px;background:#c4c2c6"></div>
<div style="left:321px;top:86px;width:1px;height:138px;background:#c4c2c6"></div>
<div style="left:371px;top:86px;width:1px;height:138px;background:#c4c2c6"></div>
<div style="left:150px;top:86px;width:55px;height:137px;background:#ffffd8"></div>
<div style="left:322px;top:86px;width:49px;height:137px;background:#ffffd8"></div>
<div style="left:247px;top:206px;width:124px;height:17px;background:#ffffd8"></div>
<div style="left:205px;top:206px;width:1px;height:17px;background:#c4c2c6"></div>
<div style="left:246px;top:206px;width:1px;height:17px;background:#c4c2c6"></div>
<div style="left:296px;top:206px;width:1px;height:17px;background:#c4c2c6"></div>
<div style="left:321px;top:206px;width:1px;height:17px;background:#c4c2c6"></div>
<div style="left:24px;top:104px;width:347px;height:1px;background:#c4c2c6"></div>
<div style="left:24px;top:121px;width:347px;height:1px;background:#c4c2c6"></div>
<div style="left:24px;top:138px;width:347px;height:1px;background:#c4c2c6"></div>
<div style="left:24px;top:155px;width:347px;height:1px;background:#c4c2c6"></div>
<div style="left:24px;top:172px;width:347px;height:1px;background:#c4c2c6"></div>
<div style="left:24px;top:189px;width:347px;height:1px;background:#c4c2c6"></div>
<div style="left:24px;top:206px;width:347px;height:1px;background:#c4c2c6"></div>
<div style="left:24px;top:223px;width:347px;height:1px;background:#c4c2c6"></div>
<div style="left:28px;top:90px;width:12px;height:12px;background:#ffff00"></div>
<div class="t" style="left:44px;top:89px;width:12px;height:13px">UA<svg class="g" width="12" height="13"><path fill="#000" d="M0 3h2v1h-2zM4 3h2v1h-2zM8 3h1v2h-1zM1 4h1v6h-1zM4 4h1v6h-1zM7 5h1v3h-1zM9 5h1v2h-1zM10 7h1v1h-1zM7 8h4v1h-4zM6 9h1v1h-1zM11 9h1v1h-1zM2 10h2v1h-2zM6 10h2v1h-2zM10 10h2v1h-2z"/></svg></div>
<div class="t" style="left:69px;top:89px;width:36px;height:13px">57.735<svg class="g" width="36" height="13"><path fill="#000" d="M1 3h5v1h-5zM7 3h5v1h-5zM19 3h5v1h-5zM26 3h3v1h-3zM31 3h5v1h-5zM1 4h1v2h-1zM7 4h1v1h-1zM11 4h1v1h-1zM19 4h1v1h-1zM23 4h1v1h-1zM25 4h1v1h-1zM29 4h1v2h-1zM31 4h1v2h-1zM10 5h1v2h-1zM22 5h1v2h-1zM1 6h4v1h-4zM27 6h2v1h-2zM31 6h4v1h-4zM5 7h1v3h-1zM9 7h1v4h-1zM21 7h1v4h-1zM29 7h1v3h-1zM35 7h1v3h-1zM1 9h1v1h-1zM25 9h1v1h-1zM31 9h1v1h-1zM2 10h3v1h-3zM14 10h1v1h-1zM26 10h3v1h-3zM32 10h3v1h-3z"/></svg></div>
<div class="t" style="left:131px;top:89px;width:12px;height:13px">×<svg class="g" width="12" height="13"><path fill="#000" d="M1 3h1v1h-1zM7 3h1v1h-1zM2 4h1v1h-1zM6 4h1v1h-1zM3 5h1v1h-1zM5 5h1v1h-1zM4 6h1v1h-1zM3 7h1v1h-1zM5 7h1v1h-1zM2 8h1v1h-1zM6 8h1v1h-1zM1 9h1v1h-1zM7 9h1v1h-1z"/></svg></div>
<div class="t" style="left:154px;top:89px;width:30px;height:13px">1.000<svg class="g" width="30" height="13"><path fill="#808080" d="M3 3h1v1h-1zM14 3h3v1h-3zM20 3h3v1h-3zM26 3h3v1h-3zM2 4h2v1h-2zM13 4h1v6h-1zM17 4h1v6h-1zM19 4h1v6h-1zM23 4h1v6h-1zM25 4h1v6h-1zM29 4h1v6h-1zM3 5h1v5h-1zM2 10h3v1h-3zM8 10h1v1h-1zM14 10h3v1h-3zM20 10h3v1h-3zM26 10h3v1h-3z"/></svg></div>
<div class="t" style="left:210px;top:89px;width:18px;height:13px">120<svg class="g" width="18" height="13"><path fill="#000" d="M3 3h1v1h-1zM8 3h3v1h-3zM14 3h3v1h-3zM2 4h2v1h-2zM7 4h1v1h-1zM11 4h1v2h-1zM13 4h1v6h-1zM17 4h1v6h-1zM3 5h1v5h-1zM10 6h1v1h-1zM9 7h1v1h-1zM8 8h1v1h-1zM7 9h1v1h-1zM11 9h1v1h-1zM2 10h3v1h-3zM7 10h5v1h-5zM14 10h3v1h-3z"/></svg></div>
<div class="t" style="left:251px;top:89px;width:18px;height:13px">0.0<svg class="g" width="18" height="13"><path fill="#000" d="M2 3h3v1h-3zM14 3h3v1h-3zM1 4h1v6h-1zM5 4h1v6h-1zM13 4h1v6h-1zM17 4h1v6h-1zM2 10h3v1h-3zM8 10h1v1h-1zM14 10h3v1h-3z"/></svg></div>
<div class="t" style="left:303px;top:89px;width:12px;height:13px">×<svg class="g" width="12" height="13"><path fill="#000" d="M1 3h1v1h-1zM7 3h1v1h-1zM2 4h1v1h-1zM6 4h1v1h-1zM3 5h1v1h-1zM5 5h1v1h-1zM4 6h1v1h-1zM3 7h1v1h-1zM5 7h1v1h-1zM2 8h1v1h-1zM6 8h1v1h-1zM1 9h1v1h-1zM7 9h1v1h-1z"/></svg></div>
<div class="t" style="left:327px;top:89px;width:18px;height:13px">1.0<svg class="g" width="18" height="13"><path fill="#808080" d="M3 3h1v1h-1zM14 3h3v1h-3zM2 4h2v1h-2zM13 4h1v6h-1zM17 4h1v6h-1zM3 5h1v5h-1zM2 10h3v1h-3zM8 10h1v1h-1zM14 10h3v1h-3z"/></svg></div>
<div style="left:28px;top:107px;width:12px;height:12px;background:#00ff00"></div>
<div class="t" style="left:44px;top:106px;width:12px;height:13px">UB<svg class="g" width="12" height="13"><path fill="#000" d="M0 3h2v1h-2zM4 3h2v1h-2zM6 3h4v1h-4zM1 4h1v6h-1zM4 4h1v6h-1zM7 4h1v2h-1zM10 4h1v2h-1zM7 6h3v1h-3zM7 7h1v3h-1zM10 7h1v3h-1zM2 10h2v1h-2zM6 10h4v1h-4z"/></svg></div>
<div class="t" style="left:69px;top:106px;width:36px;height:13px">57.735<svg class="g" width="36" height="13"><path fill="#000" d="M1 3h5v1h-5zM7 3h5v1h-5zM19 3h5v1h-5zM26 3h3v1h-3zM31 3h5v1h-5zM1 4h1v2h-1zM7 4h1v1h-1zM11 4h1v1h-1zM19 4h1v1h-1zM23 4h1v1h-1zM25 4h1v1h-1zM29 4h1v2h-1zM31 4h1v2h-1zM10 5h1v2h-1zM22 5h1v2h-1zM1 6h4v1h-4zM27 6h2v1h-2zM31 6h4v1h-4zM5 7h1v3h-1zM9 7h1v4h-1zM21 7h1v4h-1zM29 7h1v3h-1zM35 7h1v3h-1zM1 9h1v1h-1zM25 9h1v1h-1zM31 9h1v1h-1zM2 10h3v1h-3zM14 10h1v1h-1zM26 10h3v1h-3zM32 10h3v1h-3z"/></svg></div>
<div class="t" style="left:131px;top:106px;width:12px;height:13px">×<svg class="g" width="12" height="13"><path fill="#000" d="M1 3h1v1h-1zM7 3h1v1h-1zM2 4h1v1h-1zM6 4h1v1h-1zM3 5h1v1h-1zM5 5h1v1h-1zM4 6h1v1h-1zM3 7h1v1h-1zM5 7h1v1h-1zM2 8h1v1h-1zM6 8h1v1h-1zM1 9h1v1h-1zM7 9h1v1h-1z"/></svg></div>
<div class="t" style="left:154px;top:106px;width:30px;height:13px">1.000<svg class="g" width="30" height="13"><path fill="#808080" d="M3 3h1v1h-1zM14 3h3v1h-3zM20 3h3v1h-3zM26 3h3v1h-3zM2 4h2v1h-2zM13 4h1v6h-1zM17 4h1v6h-1zM19 4h1v6h-1zM23 4h1v6h-1zM25 4h1v6h-1zM29 4h1v6h-1zM3 5h1v5h-1zM2 10h3v1h-3zM8 10h1v1h-1zM14 10h3v1h-3zM20 10h3v1h-3zM26 10h3v1h-3z"/></svg></div>
<div class="t" style="left:210px;top:106px;width:18px;height:13px">120<svg class="g" width="18" height="13"><path fill="#000" d="M3 3h1v1h-1zM8 3h3v1h-3zM14 3h3v1h-3zM2 4h2v1h-2zM7 4h1v1h-1zM11 4h1v2h-1zM13 4h1v6h-1zM17 4h1v6h-1zM3 5h1v5h-1zM10 6h1v1h-1zM9 7h1v1h-1zM8 8h1v1h-1zM7 9h1v1h-1zM11 9h1v1h-1zM2 10h3v1h-3zM7 10h5v1h-5zM14 10h3v1h-3z"/></svg></div>
<div class="t" style="left:251px;top:106px;width:36px;height:13px">-120.0<svg class="g" width="36" height="13"><path fill="#000" d="M9 3h1v1h-1zM14 3h3v1h-3zM20 3h3v1h-3zM32 3h3v1h-3zM8 4h2v1h-2zM13 4h1v1h-1zM17 4h1v2h-1zM19 4h1v6h-1zM23 4h1v6h-1zM31 4h1v6h-1zM35 4h1v6h-1zM9 5h1v5h-1zM1 6h5v1h-5zM16 6h1v1h-1zM15 7h1v1h-1zM14 8h1v1h-1zM13 9h1v1h-1zM17 9h1v1h-1zM8 10h3v1h-3zM13 10h5v1h-5zM20 10h3v1h-3zM26 10h1v1h-1zM32 10h3v1h-3z"/></svg></div>
<div class="t" style="left:303px;top:106px;width:12px;height:13px">×<svg class="g" width="12" height="13"><path fill="#000" d="M1 3h1v1h-1zM7 3h1v1h-1zM2 4h1v1h-1zM6 4h1v1h-1zM3 5h1v1h-1zM5 5h1v1h-1zM4 6h1v1h-1zM3 7h1v1h-1zM5 7h1v1h-1zM2 8h1v1h-1zM6 8h1v1h-1zM1 9h1v1h-1zM7 9h1v1h-1z"/></svg></div>
<div class="t" style="left:327px;top:106px;width:18px;height:13px">1.0<svg class="g" width="18" height="13"><path fill="#808080" d="M3 3h1v1h-1zM14 3h3v1h-3zM2 4h2v1h-2zM13 4h1v6h-1zM17 4h1v6h-1zM3 5h1v5h-1zM2 10h3v1h-3zM8 10h1v1h-1zM14 10h3v1h-3z"/></svg></div>
<div style="left:28px;top:124px;width:12px;height:12px;background:#ff0000"></div>
<div class="t" style="left:44px;top:123px;width:12px;height:13px">UC<svg class="g" width="12" height="13"><path fill="#000" d="M0 3h2v1h-2zM4 3h2v1h-2zM7 3h4v1h-4zM1 4h1v6h-1zM4 4h1v6h-1zM6 4h1v6h-1zM10 4h1v1h-1zM10 9h1v1h-1zM2 10h2v1h-2zM7 10h3v1h-3z"/></svg></div>
<div class="t" style="left:69px;top:123px;width:36px;height:13px">57.735<svg class="g" width="36" height="13"><path fill="#000" d="M1 3h5v1h-5zM7 3h5v1h-5zM19 3h5v1h-5zM26 3h3v1h-3zM31 3h5v1h-5zM1 4h1v2h-1zM7 4h1v1h-1zM11 4h1v1h-1zM19 4h1v1h-1zM23 4h1v1h-1zM25 4h1v1h-1zM29 4h1v2h-1zM31 4h1v2h-1zM10 5h1v2h-1zM22 5h1v2h-1zM1 6h4v1h-4zM27 6h2v1h-2zM31 6h4v1h-4zM5 7h1v3h-1zM9 7h1v4h-1zM21 7h1v4h-1zM29 7h1v3h-1zM35 7h1v3h-1zM1 9h1v1h-1zM25 9h1v1h-1zM31 9h1v1h-1zM2 10h3v1h-3zM14 10h1v1h-1zM26 10h3v1h-3zM32 10h3v1h-3z"/></svg></div>
<div class="t" style="left:131px;top:123px;width:12px;height:13px">×<svg class="g" width="12" height="13"><path fill="#000" d="M1 3h1v1h-1zM7 3h1v1h-1zM2 4h1v1h-1zM6 4h1v1h-1zM3 5h1v1h-1zM5 5h1v1h-1zM4 6h1v1h-1zM3 7h1v1h-1zM5 7h1v1h-1zM2 8h1v1h-1zM6 8h1v1h-1zM1 9h1v1h-1zM7 9h1v1h-1z"/></svg></div>
<div class="t" style="left:154px;top:123px;width:30px;height:13px">1.000<svg class="g" width="30" height="13"><path fill="#808080" d="M3 3h1v1h-1zM14 3h3v1h-3zM20 3h3v1h-3zM26 3h3v1h-3zM2 4h2v1h-2zM13 4h1v6h-1zM17 4h1v6h-1zM19 4h1v6h-1zM23 4h1v6h-1zM25 4h1v6h-1zM29 4h1v6h-1zM3 5h1v5h-1zM2 10h3v1h-3zM8 10h1v1h-1zM14 10h3v1h-3zM20 10h3v1h-3zM26 10h3v1h-3z"/></svg></div>
<div class="t" style="left:210px;top:123px;width:18px;height:13px">120<svg class="g" width="18" height="13"><path fill="#000" d="M3 3h1v1h-1zM8 3h3v1h-3zM14 3h3v1h-3zM2 4h2v1h-2zM7 4h1v1h-1zM11 4h1v2h-1zM13 4h1v6h-1zM17 4h1v6h-1zM3 5h1v5h-1zM10 6h1v1h-1zM9 7h1v1h-1zM8 8h1v1h-1zM7 9h1v1h-1zM11 9h1v1h-1zM2 10h3v1h-3zM7 10h5v1h-5zM14 10h3v1h-3z"/></svg></div>
<div class="t" style="left:251px;top:123px;width:30px;height:13px">120.0<svg class="g" width="30" height="13"><path fill="#000" d="M3 3h1v1h-1zM8 3h3v1h-3zM14 3h3v1h-3zM26 3h3v1h-3zM2 4h2v1h-2zM7 4h1v1h-1zM11 4h1v2h-1zM13 4h1v6h-1zM17 4h1v6h-1zM25 4h1v6h-1zM29 4h1v6h-1zM3 5h1v5h-1zM10 6h1v1h-1zM9 7h1v1h-1zM8 8h1v1h-1zM7 9h1v1h-1zM11 9h1v1h-1zM2 10h3v1h-3zM7 10h5v1h-5zM14 10h3v1h-3zM20 10h1v1h-1zM26 10h3v1h-3z"/></svg></div>
<div class="t" style="left:303px;top:123px;width:12px;height:13px">×<svg class="g" width="12" height="13"><path fill="#000" d="M1 3h1v1h-1zM7 3h1v1h-1zM2 4h1v1h-1zM6 4h1v1h-1zM3 5h1v1h-1zM5 5h1v1h-1zM4 6h1v1h-1zM3 7h1v1h-1zM5 7h1v1h-1zM2 8h1v1h-1zM6 8h1v1h-1zM1 9h1v1h-1zM7 9h1v1h-1z"/></svg></div>
<div class="t" style="left:327px;top:123px;width:18px;height:13px">1.0<svg class="g" width="18" height="13"><path fill="#808080" d="M3 3h1v1h-1zM14 3h3v1h-3zM2 4h2v1h-2zM13 4h1v6h-1zM17 4h1v6h-1zM3 5h1v5h-1zM2 10h3v1h-3zM8 10h1v1h-1zM14 10h3v1h-3z"/></svg></div>
<div style="left:28px;top:141px;width:12px;height:12px;background:#ffff00"></div>
<div class="t" style="left:44px;top:140px;width:12px;height:13px">IA<svg class="g" width="12" height="13"><path fill="#000" d="M0 3h5v1h-5zM8 3h1v2h-1zM2 4h1v6h-1zM7 5h1v3h-1zM9 5h1v2h-1zM10 7h1v1h-1zM7 8h4v1h-4zM6 9h1v1h-1zM11 9h1v1h-1zM0 10h5v1h-5zM6 10h2v1h-2zM10 10h2v1h-2z"/></svg></div>
<div class="t" style="left:69px;top:140px;width:30px;height:13px">5.000<svg class="g" width="30" height="13"><path fill="#000" d="M1 3h5v1h-5zM14 3h3v1h-3zM20 3h3v1h-3zM26 3h3v1h-3zM1 4h1v2h-1zM13 4h1v6h-1zM17 4h1v6h-1zM19 4h1v6h-1zM23 4h1v6h-1zM25 4h1v6h-1zM29 4h1v6h-1zM1 6h4v1h-4zM5 7h1v3h-1zM1 9h1v1h-1zM2 10h3v1h-3zM8 10h1v1h-1zM14 10h3v1h-3zM20 10h3v1h-3zM26 10h3v1h-3z"/></svg></div>
<div class="t" style="left:131px;top:140px;width:12px;height:13px">×<svg class="g" width="12" height="13"><path fill="#000" d="M1 3h1v1h-1zM7 3h1v1h-1zM2 4h1v1h-1zM6 4h1v1h-1zM3 5h1v1h-1zM5 5h1v1h-1zM4 6h1v1h-1zM3 7h1v1h-1zM5 7h1v1h-1zM2 8h1v1h-1zM6 8h1v1h-1zM1 9h1v1h-1zM7 9h1v1h-1z"/></svg></div>
<div class="t" style="left:154px;top:140px;width:30px;height:13px">1.000<svg class="g" width="30" height="13"><path fill="#808080" d="M3 3h1v1h-1zM14 3h3v1h-3zM20 3h3v1h-3zM26 3h3v1h-3zM2 4h2v1h-2zM13 4h1v6h-1zM17 4h1v6h-1zM19 4h1v6h-1zM23 4h1v6h-1zM25 4h1v6h-1zM29 4h1v6h-1zM3 5h1v5h-1zM2 10h3v1h-3zM8 10h1v1h-1zM14 10h3v1h-3zM20 10h3v1h-3zM26 10h3v1h-3z"/></svg></div>
<div class="t" style="left:210px;top:140px;width:12px;height:13px">40<svg class="g" width="12" height="13"><path fill="#000" d="M4 3h1v1h-1zM8 3h3v1h-3zM3 4h2v1h-2zM7 4h1v6h-1zM11 4h1v6h-1zM2 5h1v1h-1zM4 5h1v3h-1zM1 6h1v2h-1zM1 8h5v1h-5zM4 9h1v1h-1zM3 10h3v1h-3zM8 10h3v1h-3z"/></svg></div>
<div class="t" style="left:251px;top:140px;width:18px;height:13px">0.0<svg class="g" width="18" height="13"><path fill="#000" d="M2 3h3v1h-3zM14 3h3v1h-3zM1 4h1v6h-1zM5 4h1v6h-1zM13 4h1v6h-1zM17 4h1v6h-1zM2 10h3v1h-3zM8 10h1v1h-1zM14 10h3v1h-3z"/></svg></div>
<div class="t" style="left:303px;top:140px;width:12px;height:13px">×<svg class="g" width="12" height="13"><path fill="#000" d="M1 3h1v1h-1zM7 3h1v1h-1zM2 4h1v1h-1zM6 4h1v1h-1zM3 5h1v1h-1zM5 5h1v1h-1zM4 6h1v1h-1zM3 7h1v1h-1zM5 7h1v1h-1zM2 8h1v1h-1zM6 8h1v1h-1zM1 9h1v1h-1zM7 9h1v1h-1z"/></svg></div>
<div class="t" style="left:327px;top:140px;width:18px;height:13px">1.0<svg class="g" width="18" height="13"><path fill="#808080" d="M3 3h1v1h-1zM14 3h3v1h-3zM2 4h2v1h-2zM13 4h1v6h-1zM17 4h1v6h-1zM3 5h1v5h-1zM2 10h3v1h-3zM8 10h1v1h-1zM14 10h3v1h-3z"/></svg></div>
<div style="left:28px;top:158px;width:12px;height:12px;background:#00ff00"></div>
<div class="t" style="left:44px;top:157px;width:12px;height:13px">IB<svg class="g" width="12" height="13"><path fill="#000" d="M0 3h5v1h-5zM6 3h4v1h-4zM2 4h1v6h-1zM7 4h1v2h-1zM10 4h1v2h-1zM7 6h3v1h-3zM7 7h1v3h-1zM10 7h1v3h-1zM0 10h5v1h-5zM6 10h4v1h-4z"/></svg></div>
<div class="t" style="left:69px;top:157px;width:30px;height:13px">5.000<svg class="g" width="30" height="13"><path fill="#000" d="M1 3h5v1h-5zM14 3h3v1h-3zM20 3h3v1h-3zM26 3h3v1h-3zM1 4h1v2h-1zM13 4h1v6h-1zM17 4h1v6h-1zM19 4h1v6h-1zM23 4h1v6h-1zM25 4h1v6h-1zM29 4h1v6h-1zM1 6h4v1h-4zM5 7h1v3h-1zM1 9h1v1h-1zM2 10h3v1h-3zM8 10h1v1h-1zM14 10h3v1h-3zM20 10h3v1h-3zM26 10h3v1h-3z"/></svg></div>
<div class="t" style="left:131px;top:157px;width:12px;height:13px">×<svg class="g" width="12" height="13"><path fill="#000" d="M1 3h1v1h-1zM7 3h1v1h-1zM2 4h1v1h-1zM6 4h1v1h-1zM3 5h1v1h-1zM5 5h1v1h-1zM4 6h1v1h-1zM3 7h1v1h-1zM5 7h1v1h-1zM2 8h1v1h-1zM6 8h1v1h-1zM1 9h1v1h-1zM7 9h1v1h-1z"/></svg></div>
<div class="t" style="left:154px;top:157px;width:30px;height:13px">1.000<svg class="g" width="30" height="13"><path fill="#808080" d="M3 3h1v1h-1zM14 3h3v1h-3zM20 3h3v1h-3zM26 3h3v1h-3zM2 4h2v1h-2zM13 4h1v6h-1zM17 4h1v6h-1zM19 4h1v6h-1zM23 4h1v6h-1zM25 4h1v6h-1zM29 4h1v6h-1zM3 5h1v5h-1zM2 10h3v1h-3zM8 10h1v1h-1zM14 10h3v1h-3zM20 10h3v1h-3zM26 10h3v1h-3z"/></svg></div>
<div class="t" style="left:210px;top:157px;width:12px;height:13px">40<svg class="g" width="12" height="13"><path fill="#000" d="M4 3h1v1h-1zM8 3h3v1h-3zM3 4h2v1h-2zM7 4h1v6h-1zM11 4h1v6h-1zM2 5h1v1h-1zM4 5h1v3h-1zM1 6h1v2h-1zM1 8h5v1h-5zM4 9h1v1h-1zM3 10h3v1h-3zM8 10h3v1h-3z"/></svg></div>
<div class="t" style="left:251px;top:157px;width:36px;height:13px">-120.0<svg class="g" width="36" height="13"><path fill="#000" d="M9 3h1v1h-1zM14 3h3v1h-3zM20 3h3v1h-3zM32 3h3v1h-3zM8 4h2v1h-2zM13 4h1v1h-1zM17 4h1v2h-1zM19 4h1v6h-1zM23 4h1v6h-1zM31 4h1v6h-1zM35 4h1v6h-1zM9 5h1v5h-1zM1 6h5v1h-5zM16 6h1v1h-1zM15 7h1v1h-1zM14 8h1v1h-1zM13 9h1v1h-1zM17 9h1v1h-1zM8 10h3v1h-3zM13 10h5v1h-5zM20 10h3v1h-3zM26 10h1v1h-1zM32 10h3v1h-3z"/></svg></div>
<div class="t" style="left:303px;top:157px;width:12px;height:13px">×<svg class="g" width="12" height="13"><path fill="#000" d="M1 3h1v1h-1zM7 3h1v1h-1zM2 4h1v1h-1zM6 4h1v1h-1zM3 5h1v1h-1zM5 5h1v1h-1zM4 6h1v1h-1zM3 7h1v1h-1zM5 7h1v1h-1zM2 8h1v1h-1zM6 8h1v1h-1zM1 9h1v1h-1zM7 9h1v1h-1z"/></svg></div>
<div class="t" style="left:327px;top:157px;width:18px;height:13px">1.0<svg class="g" width="18" height="13"><path fill="#808080" d="M3 3h1v1h-1zM14 3h3v1h-3zM2 4h2v1h-2zM13 4h1v6h-1zM17 4h1v6h-1zM3 5h1v5h-1zM2 10h3v1h-3zM8 10h1v1h-1zM14 10h3v1h-3z"/></svg></div>
<div style="left:28px;top:175px;width:12px;height:12px;background:#ff0000"></div>
<div class="t" style="left:44px;top:174px;width:12px;height:13px">IC<svg class="g" width="12" height="13"><path fill="#000" d="M0 3h5v1h-5zM7 3h4v1h-4zM2 4h1v6h-1zM6 4h1v6h-1zM10 4h1v1h-1zM10 9h1v1h-1zM0 10h5v1h-5zM7 10h3v1h-3z"/></svg></div>
<div class="t" style="left:131px;top:174px;width:12px;height:13px">×<svg class="g" width="12" height="13"><path fill="#000" d="M1 3h1v1h-1zM7 3h1v1h-1zM2 4h1v1h-1zM6 4h1v1h-1zM3 5h1v1h-1zM5 5h1v1h-1zM4 6h1v1h-1zM3 7h1v1h-1zM5 7h1v1h-1zM2 8h1v1h-1zM6 8h1v1h-1zM1 9h1v1h-1zM7 9h1v1h-1z"/></svg></div>
<div class="t" style="left:154px;top:174px;width:30px;height:13px">1.000<svg class="g" width="30" height="13"><path fill="#808080" d="M3 3h1v1h-1zM14 3h3v1h-3zM20 3h3v1h-3zM26 3h3v1h-3zM2 4h2v1h-2zM13 4h1v6h-1zM17 4h1v6h-1zM19 4h1v6h-1zM23 4h1v6h-1zM25 4h1v6h-1zM29 4h1v6h-1zM3 5h1v5h-1zM2 10h3v1h-3zM8 10h1v1h-1zM14 10h3v1h-3zM20 10h3v1h-3zM26 10h3v1h-3z"/></svg></div>
<div class="t" style="left:210px;top:174px;width:12px;height:13px">40<svg class="g" width="12" height="13"><path fill="#000" d="M4 3h1v1h-1zM8 3h3v1h-3zM3 4h2v1h-2zM7 4h1v6h-1zM11 4h1v6h-1zM2 5h1v1h-1zM4 5h1v3h-1zM1 6h1v2h-1zM1 8h5v1h-5zM4 9h1v1h-1zM3 10h3v1h-3zM8 10h3v1h-3z"/></svg></div>
<div class="t" style="left:251px;top:174px;width:30px;height:13px">120.0<svg class="g" width="30" height="13"><path fill="#000" d="M3 3h1v1h-1zM8 3h3v1h-3zM14 3h3v1h-3zM26 3h3v1h-3zM2 4h2v1h-2zM7 4h1v1h-1zM11 4h1v2h-1zM13 4h1v6h-1zM17 4h1v6h-1zM25 4h1v6h-1zM29 4h1v6h-1zM3 5h1v5h-1zM10 6h1v1h-1zM9 7h1v1h-1zM8 8h1v1h-1zM7 9h1v1h-1zM11 9h1v1h-1zM2 10h3v1h-3zM7 10h5v1h-5zM14 10h3v1h-3zM20 10h1v1h-1zM26 10h3v1h-3z"/></svg></div>
<div class="t" style="left:303px;top:174px;width:12px;height:13px">×<svg class="g" width="12" height="13"><path fill="#000" d="M1 3h1v1h-1zM7 3h1v1h-1zM2 4h1v1h-1zM6 4h1v1h-1zM3 5h1v1h-1zM5 5h1v1h-1zM4 6h1v1h-1zM3 7h1v1h-1zM5 7h1v1h-1zM2 8h1v1h-1zM6 8h1v1h-1zM1 9h1v1h-1zM7 9h1v1h-1z"/></svg></div>
<div class="t" style="left:327px;top:174px;width:18px;height:13px">1.0<svg class="g" width="18" height="13"><path fill="#808080" d="M3 3h1v1h-1zM14 3h3v1h-3zM2 4h2v1h-2zM13 4h1v6h-1zM17 4h1v6h-1zM3 5h1v5h-1zM2 10h3v1h-3zM8 10h1v1h-1zM14 10h3v1h-3z"/></svg></div>
<div style="left:28px;top:192px;width:12px;height:12px;background:#0000ff"></div>
<div class="t" style="left:44px;top:191px;width:12px;height:13px">Ux<svg class="g" width="12" height="13"><path fill="#000" d="M0 3h2v1h-2zM4 3h2v1h-2zM1 4h1v6h-1zM4 4h1v6h-1zM6 6h2v1h-2zM9 6h2v1h-2zM7 7h1v1h-1zM9 7h1v1h-1zM8 8h1v1h-1zM7 9h1v1h-1zM9 9h1v1h-1zM2 10h2v1h-2zM6 10h2v1h-2zM9 10h2v1h-2z"/></svg></div>
<div class="t" style="left:69px;top:191px;width:36px;height:13px">10.000<svg class="g" width="36" height="13"><path fill="#000" d="M3 3h1v1h-1zM8 3h3v1h-3zM20 3h3v1h-3zM26 3h3v1h-3zM32 3h3v1h-3zM2 4h2v1h-2zM7 4h1v6h-1zM11 4h1v6h-1zM19 4h1v6h-1zM23 4h1v6h-1zM25 4h1v6h-1zM29 4h1v6h-1zM31 4h1v6h-1zM35 4h1v6h-1zM3 5h1v5h-1zM2 10h3v1h-3zM8 10h3v1h-3zM14 10h1v1h-1zM20 10h3v1h-3zM26 10h3v1h-3zM32 10h3v1h-3z"/></svg></div>
<div class="t" style="left:131px;top:191px;width:12px;height:13px">×<svg class="g" width="12" height="13"><path fill="#000" d="M1 3h1v1h-1zM7 3h1v1h-1zM2 4h1v1h-1zM6 4h1v1h-1zM3 5h1v1h-1zM5 5h1v1h-1zM4 6h1v1h-1zM3 7h1v1h-1zM5 7h1v1h-1zM2 8h1v1h-1zM6 8h1v1h-1zM1 9h1v1h-1zM7 9h1v1h-1z"/></svg></div>
<div class="t" style="left:154px;top:191px;width:30px;height:13px">1.000<svg class="g" width="30" height="13"><path fill="#808080" d="M3 3h1v1h-1zM14 3h3v1h-3zM20 3h3v1h-3zM26 3h3v1h-3zM2 4h2v1h-2zM13 4h1v6h-1zM17 4h1v6h-1zM19 4h1v6h-1zM23 4h1v6h-1zM25 4h1v6h-1zM29 4h1v6h-1zM3 5h1v5h-1zM2 10h3v1h-3zM8 10h1v1h-1zM14 10h3v1h-3zM20 10h3v1h-3zM26 10h3v1h-3z"/></svg></div>
<div class="t" style="left:210px;top:191px;width:18px;height:13px">120<svg class="g" width="18" height="13"><path fill="#000" d="M3 3h1v1h-1zM8 3h3v1h-3zM14 3h3v1h-3zM2 4h2v1h-2zM7 4h1v1h-1zM11 4h1v2h-1zM13 4h1v6h-1zM17 4h1v6h-1zM3 5h1v5h-1zM10 6h1v1h-1zM9 7h1v1h-1zM8 8h1v1h-1zM7 9h1v1h-1zM11 9h1v1h-1zM2 10h3v1h-3zM7 10h5v1h-5zM14 10h3v1h-3z"/></svg></div>
<div class="t" style="left:251px;top:191px;width:18px;height:13px">0.0<svg class="g" width="18" height="13"><path fill="#000" d="M2 3h3v1h-3zM14 3h3v1h-3zM1 4h1v6h-1zM5 4h1v6h-1zM13 4h1v6h-1zM17 4h1v6h-1zM2 10h3v1h-3zM8 10h1v1h-1zM14 10h3v1h-3z"/></svg></div>
<div class="t" style="left:303px;top:191px;width:12px;height:13px">×<svg class="g" width="12" height="13"><path fill="#000" d="M1 3h1v1h-1zM7 3h1v1h-1zM2 4h1v1h-1zM6 4h1v1h-1zM3 5h1v1h-1zM5 5h1v1h-1zM4 6h1v1h-1zM3 7h1v1h-1zM5 7h1v1h-1zM2 8h1v1h-1zM6 8h1v1h-1zM1 9h1v1h-1zM7 9h1v1h-1z"/></svg></div>
<div class="t" style="left:327px;top:191px;width:18px;height:13px">1.0<svg class="g" width="18" height="13"><path fill="#808080" d="M3 3h1v1h-1zM14 3h3v1h-3zM2 4h2v1h-2zM13 4h1v6h-1zM17 4h1v6h-1zM3 5h1v5h-1zM2 10h3v1h-3zM8 10h1v1h-1zM14 10h3v1h-3z"/></svg></div>
<div class="t" style="left:44px;top:208px;width:12px;height:13px">Hz<svg class="g" width="12" height="13"><path fill="#000" d="M0 3h2v1h-2zM3 3h2v1h-2zM1 4h1v2h-1zM3 4h1v2h-1zM1 6h3v1h-3zM6 6h5v1h-5zM1 7h1v3h-1zM3 7h1v3h-1zM6 7h1v1h-1zM9 7h1v1h-1zM8 8h1v1h-1zM7 9h1v1h-1zM10 9h1v1h-1zM0 10h2v1h-2zM3 10h2v1h-2zM6 10h5v1h-5z"/></svg></div>
<div class="t" style="left:69px;top:208px;width:36px;height:13px">50.000<svg class="g" width="36" height="13"><path fill="#000" d="M1 3h5v1h-5zM8 3h3v1h-3zM20 3h3v1h-3zM26 3h3v1h-3zM32 3h3v1h-3zM1 4h1v2h-1zM7 4h1v6h-1zM11 4h1v6h-1zM19 4h1v6h-1zM23 4h1v6h-1zM25 4h1v6h-1zM29 4h1v6h-1zM31 4h1v6h-1zM35 4h1v6h-1zM1 6h4v1h-4zM5 7h1v3h-1zM1 9h1v1h-1zM2 10h3v1h-3zM8 10h3v1h-3zM14 10h1v1h-1zM20 10h3v1h-3zM26 10h3v1h-3zM32 10h3v1h-3z"/></svg></div>
<div class="t" style="left:131px;top:208px;width:12px;height:13px">×<svg class="g" width="12" height="13"><path fill="#000" d="M1 3h1v1h-1zM7 3h1v1h-1zM2 4h1v1h-1zM6 4h1v1h-1zM3 5h1v1h-1zM5 5h1v1h-1zM4 6h1v1h-1zM3 7h1v1h-1zM5 7h1v1h-1zM2 8h1v1h-1zM6 8h1v1h-1zM1 9h1v1h-1zM7 9h1v1h-1z"/></svg></div>
<div class="t" style="left:154px;top:208px;width:30px;height:13px">0.000<svg class="g" width="30" height="13"><path fill="#808080" d="M2 3h3v1h-3zM14 3h3v1h-3zM20 3h3v1h-3zM26 3h3v1h-3zM1 4h1v6h-1zM5 4h1v6h-1zM13 4h1v6h-1zM17 4h1v6h-1zM19 4h1v6h-1zM23 4h1v6h-1zM25 4h1v6h-1zM29 4h1v6h-1zM2 10h3v1h-3zM8 10h1v1h-1zM14 10h3v1h-3zM20 10h3v1h-3zM26 10h3v1h-3z"/></svg></div>
<div class="t" style="left:210px;top:208px;width:24px;height:13px">1000<svg class="g" width="24" height="13"><path fill="#000" d="M3 3h1v1h-1zM8 3h3v1h-3zM14 3h3v1h-3zM20 3h3v1h-3zM2 4h2v1h-2zM7 4h1v6h-1zM11 4h1v6h-1zM13 4h1v6h-1zM17 4h1v6h-1zM19 4h1v6h-1zM23 4h1v6h-1zM3 5h1v5h-1zM2 10h3v1h-3zM8 10h3v1h-3zM14 10h3v1h-3zM20 10h3v1h-3z"/></svg></div>
<div class="t" style="left:251px;top:208px;width:0px;height:13px"><svg class="g" width="0" height="13"><path fill="#000" d=""/></svg></div>
<div style="left:70px;top:173px;width:54px;height:16px;background:#fff;border:1px solid #000"></div>
<div style="left:72px;top:175px;width:30px;height:12px;background:#000080"></div>
<div class="t" style="left:71px;top:174px;width:30px;height:13px">5.000<svg class="g" width="30" height="13"><path fill="#fff" d="M1 3h5v1h-5zM14 3h3v1h-3zM20 3h3v1h-3zM26 3h3v1h-3zM1 4h1v2h-1zM13 4h1v6h-1zM17 4h1v6h-1zM19 4h1v6h-1zM23 4h1v6h-1zM25 4h1v6h-1zM29 4h1v6h-1zM1 6h4v1h-4zM5 7h1v3h-1zM1 9h1v1h-1zM2 10h3v1h-3zM8 10h1v1h-1zM14 10h3v1h-3zM20 10h3v1h-3zM26 10h3v1h-3z"/></svg></div>
<div class="t" style="left:27px;top:232px;width:18px;height:13px">Ux:<svg class="g" width="18" height="13"><path fill="#000" d="M0 3h2v1h-2zM4 3h2v1h-2zM1 4h1v6h-1zM4 4h1v6h-1zM13 5h1v1h-1zM6 6h2v1h-2zM9 6h2v1h-2zM7 7h1v1h-1zM9 7h1v1h-1zM8 8h1v1h-1zM7 9h1v1h-1zM9 9h1v1h-1zM13 9h1v1h-1zM2 10h2v1h-2zM6 10h2v1h-2zM9 10h2v1h-2z"/></svg></div>
<div style="left:51px;top:227px;width:124px;height:19px;background:#fff;border-top:1px solid #808080;border-left:1px solid #808080;border-right:1px solid #fff;border-bottom:1px solid #fff"></div>
<div style="left:52px;top:228px;width:122px;height:17px;border-top:1px solid #000;border-left:1px solid #000;border-right:1px solid #dfdfdf;border-bottom:1px solid #dfdfdf"></div>
<div class="t" style="left:55px;top:231px;width:48px;height:13px">任意方式<svg class="g" width="48" height="13"><path fill="#000" d="M3 1h1v2h-1zM8 1h2v1h-2zM17 1h1v1h-1zM28 1h1v1h-1zM42 1h1v3h-1zM44 1h1v1h-1zM5 2h3v1h-3zM13 2h9v1h-9zM29 2h1v1h-1zM45 2h1v1h-1zM2 3h1v2h-1zM7 3h1v3h-1zM15 3h1v1h-1zM19 3h1v1h-1zM24 3h11v1h-11zM12 4h11v1h-11zM28 4h1v2h-1zM36 4h11v1h-11zM1 5h2v1h-2zM14 5h1v1h-1zM20 5h1v1h-1zM42 5h1v3h-1zM0 6h1v1h-1zM2 6h1v6h-1zM4 6h7v1h-7zM14 6h7v1h-7zM28 6h5v1h-5zM37 6h4v1h-4zM7 7h1v4h-1zM14 7h1v1h-1zM20 7h1v1h-1zM27 7h1v2h-1zM32 7h1v4h-1zM39 7h1v3h-1zM14 8h7v1h-7zM43 8h1v2h-1zM13 9h1v2h-1zM15 9h1v2h-1zM17 9h1v1h-1zM21 9h1v1h-1zM26 9h1v1h-1zM46 9h1v2h-1zM18 10h1v1h-1zM20 10h1v1h-1zM22 10h1v2h-1zM25 10h1v1h-1zM39 10h2v1h-2zM44 10h1v1h-1zM5 11h5v1h-5zM12 11h1v1h-1zM15 11h6v1h-6zM24 11h1v1h-1zM29 11h3v1h-3zM36 11h3v1h-3zM45 11h2v1h-2z"/></svg></div>
<div style="left:158px;top:229px;width:16px;height:15px;background:#c4c2c6;border-top:1px solid #fff;border-left:1px solid #fff;border-right:1px solid #000;border-bottom:1px solid #000"></div>
<div style="left:159px;top:230px;width:14px;height:13px;border-right:1px solid #808080;border-bottom:1px solid #808080"></div>
<svg style="left:158px;top:229px" width="16" height="15" viewBox="0 0 16 15"><path d="M4 6h7l-3.5 4z" fill="#000"/></svg>
<div class="t" style="left:216px;top:229px;width:96px;height:13px">开关变位确认时间<svg class="g" width="96" height="13"><path fill="#000" d="M1 1h9v1h-9zM14 1h1v1h-1zM20 1h1v1h-1zM29 1h1v1h-1zM39 1h1v2h-1zM42 1h1v1h-1zM54 1h1v1h-1zM61 1h1v1h-1zM67 1h1v6h-1zM80 1h1v2h-1zM86 1h1v1h-1zM89 1h6v1h-6zM3 2h1v4h-1zM7 2h1v4h-1zM15 2h1v1h-1zM19 2h1v1h-1zM25 2h10v1h-10zM43 2h1v1h-1zM48 2h4v1h-4zM54 2h4v1h-4zM62 2h1v1h-1zM72 2h4v1h-4zM87 2h1v1h-1zM94 2h1v9h-1zM13 3h9v1h-9zM28 3h1v3h-1zM31 3h1v3h-1zM38 3h1v2h-1zM50 3h1v1h-1zM53 3h1v1h-1zM56 3h1v1h-1zM72 3h1v3h-1zM75 3h8v1h-8zM85 3h1v9h-1zM17 4h1v2h-1zM26 4h1v1h-1zM33 4h1v1h-1zM40 4h7v1h-7zM49 4h1v1h-1zM52 4h7v1h-7zM75 4h1v2h-1zM80 4h1v7h-1zM88 4h4v1h-4zM25 5h1v1h-1zM34 5h1v1h-1zM37 5h2v1h-2zM48 5h4v1h-4zM53 5h1v1h-1zM55 5h1v1h-1zM58 5h1v1h-1zM60 5h3v1h-3zM77 5h1v1h-1zM88 5h1v1h-1zM91 5h1v1h-1zM0 6h11v1h-11zM12 6h10v1h-10zM36 6h1v1h-1zM38 6h1v6h-1zM41 6h1v1h-1zM45 6h1v2h-1zM49 6h1v3h-1zM51 6h1v3h-1zM53 6h6v1h-6zM62 6h1v3h-1zM72 6h4v1h-4zM78 6h1v2h-1zM88 6h4v1h-4zM3 7h1v1h-1zM7 7h1v5h-1zM17 7h1v1h-1zM26 7h8v1h-8zM42 7h1v2h-1zM53 7h1v1h-1zM55 7h1v1h-1zM58 7h1v1h-1zM66 7h1v2h-1zM68 7h1v2h-1zM72 7h1v3h-1zM75 7h1v3h-1zM88 7h1v2h-1zM91 7h1v2h-1zM2 8h1v2h-1zM16 8h1v1h-1zM18 8h1v1h-1zM28 8h1v1h-1zM31 8h1v1h-1zM44 8h1v2h-1zM53 8h6v1h-6zM64 8h1v1h-1zM15 9h1v1h-1zM19 9h1v1h-1zM29 9h2v1h-2zM49 9h3v1h-3zM53 9h1v2h-1zM55 9h1v2h-1zM58 9h1v2h-1zM62 9h2v1h-2zM65 9h1v1h-1zM69 9h1v2h-1zM88 9h4v1h-4zM1 10h1v1h-1zM14 10h1v1h-1zM20 10h1v1h-1zM28 10h1v1h-1zM31 10h1v1h-1zM43 10h1v1h-1zM49 10h1v1h-1zM62 10h1v1h-1zM64 10h1v1h-1zM72 10h4v1h-4zM0 11h1v1h-1zM12 11h2v1h-2zM21 11h2v1h-2zM25 11h3v1h-3zM32 11h3v1h-3zM40 11h7v1h-7zM52 11h1v1h-1zM57 11h2v1h-2zM63 11h1v1h-1zM70 11h1v1h-1zM78 11h3v1h-3zM92 11h3v1h-3z"/></svg></div>
<div style="left:315px;top:227px;width:41px;height:21px;background:#fff;border-top:1px solid #808080;border-left:1px solid #808080;border-right:1px solid #fff;border-bottom:1px solid #fff"></div>
<div style="left:316px;top:228px;width:39px;height:19px;border-top:1px solid #000;border-left:1px solid #000;border-right:1px solid #dfdfdf;border-bottom:1px solid #dfdfdf"></div>
<div class="t" style="left:317px;top:229px;width:6px;height:13px">5<svg class="g" width="6" height="13"><path fill="#000" d="M1 3h5v1h-5zM1 4h1v2h-1zM1 6h4v1h-4zM5 7h1v3h-1zM1 9h1v1h-1zM2 10h3v1h-3z"/></svg></div>
<div class="t" style="left:358px;top:228px;width:12px;height:13px">ms<svg class="g" width="12" height="13"><path fill="#000" d="M0 6h4v1h-4zM7 6h4v1h-4zM0 7h1v4h-1zM2 7h1v4h-1zM4 7h1v4h-1zM6 7h1v1h-1zM7 8h3v1h-3zM10 9h1v1h-1zM6 10h4v1h-4z"/></svg></div>
<div style="left:31px;top:263px;width:142px;height:50px;border:1px solid #808080"></div>
<div style="left:32px;top:264px;width:140px;height:48px;border-top:1px solid #fff;border-left:1px solid #fff"></div>
<div style="left:31px;top:313px;width:143px;height:1px;background:#fff"></div>
<div style="left:173px;top:263px;width:1px;height:51px;background:#fff"></div>
<div style="left:38px;top:256px;width:52px;height:12px;background:#c4c2c6"></div>
<div class="t" style="left:40px;top:256px;width:48px;height:13px">试验目的<svg class="g" width="48" height="13"><path fill="#000" d="M1 1h1v1h-1zM7 1h1v2h-1zM9 1h1v1h-1zM12 1h4v1h-4zM19 1h1v2h-1zM26 1h7v1h-7zM39 1h1v1h-1zM43 1h1v2h-1zM2 2h1v1h-1zM10 2h1v1h-1zM15 2h1v2h-1zM26 2h1v2h-1zM32 2h1v2h-1zM38 2h1v1h-1zM3 3h8v1h-8zM13 3h1v3h-1zM18 3h1v1h-1zM20 3h1v1h-1zM37 3h4v1h-4zM42 3h5v1h-5zM7 4h1v1h-1zM15 4h3v1h-3zM21 4h2v1h-2zM26 4h7v1h-7zM37 4h1v2h-1zM40 4h2v1h-2zM46 4h1v7h-1zM0 5h3v1h-3zM4 5h4v1h-4zM15 5h1v1h-1zM18 5h3v1h-3zM26 5h1v2h-1zM32 5h1v2h-1zM40 5h1v1h-1zM2 6h1v4h-1zM5 6h1v3h-1zM7 6h1v2h-1zM13 6h4v1h-4zM37 6h4v1h-4zM42 6h1v1h-1zM16 7h1v1h-1zM18 7h1v1h-1zM21 7h1v2h-1zM26 7h7v1h-7zM37 7h1v3h-1zM40 7h1v3h-1zM43 7h1v2h-1zM8 8h1v2h-1zM10 8h1v2h-1zM14 8h4v1h-4zM19 8h1v1h-1zM26 8h1v2h-1zM32 8h1v2h-1zM5 9h2v1h-2zM12 9h2v1h-2zM16 9h1v2h-1zM18 9h1v1h-1zM20 9h1v1h-1zM2 10h3v1h-3zM9 10h2v1h-2zM19 10h1v1h-1zM26 10h7v1h-7zM37 10h4v1h-4zM2 11h1v1h-1zM10 11h1v1h-1zM14 11h2v1h-2zM17 11h6v1h-6zM26 11h1v1h-1zM32 11h1v1h-1zM37 11h1v1h-1zM40 11h1v1h-1zM44 11h2v1h-2z"/></svg></div>
<svg class="g" style="left:50px;top:276px" width="12" height="12"><path fill="#808080" d="M4 0h4v1h-4zM2 1h2v1h-2zM8 1h2v1h-2zM1 2h1v1h-1zM1 3h1v1h-1zM0 4h1v1h-1zM0 5h1v1h-1zM0 6h1v1h-1zM0 7h1v1h-1zM1 8h1v1h-1zM1 9h1v1h-1z"/><path fill="#000" d="M4 1h4v1h-4zM2 2h2v1h-2zM8 2h1v1h-1zM2 3h1v1h-1zM1 4h1v1h-1zM1 5h1v1h-1zM1 6h1v1h-1zM1 7h1v1h-1zM2 8h1v1h-1z"/><path fill="#fff" d="M4 2h4v1h-4zM10 2h1v1h-1zM3 3h6v1h-6zM10 3h1v1h-1zM2 4h8v1h-8zM11 4h1v1h-1zM2 5h8v1h-8zM11 5h1v1h-1zM2 6h8v1h-8zM11 6h1v1h-1zM2 7h8v1h-8zM11 7h1v1h-1zM3 8h6v1h-6zM10 8h1v1h-1zM4 9h4v1h-4zM10 9h1v1h-1zM2 10h2v1h-2zM8 10h2v1h-2zM4 11h4v1h-4z"/><path fill="#dfdfdf" d="M9 2h1v1h-1zM9 3h1v1h-1zM10 4h1v1h-1zM10 5h1v1h-1zM10 6h1v1h-1zM10 7h1v1h-1zM9 8h1v1h-1zM2 9h2v1h-2zM8 9h2v1h-2zM4 10h4v1h-4z"/></svg>
<div class="t" style="left:66px;top:275px;width:60px;height:13px">测接点动作<svg class="g" width="60" height="13"><path fill="#000" d="M0 1h1v1h-1zM2 1h5v1h-5zM10 1h1v10h-1zM14 1h1v2h-1zM19 1h1v1h-1zM29 1h1v2h-1zM43 1h1v3h-1zM51 1h1v2h-1zM53 1h1v2h-1zM1 2h2v1h-2zM6 2h1v6h-1zM8 2h1v7h-1zM16 2h7v1h-7zM37 2h4v1h-4zM2 3h1v2h-1zM4 3h1v6h-1zM12 3h4v1h-4zM17 3h1v1h-1zM21 3h1v1h-1zM29 3h5v1h-5zM50 3h1v2h-1zM53 3h6v1h-6zM0 4h1v1h-1zM14 4h1v2h-1zM18 4h1v1h-1zM20 4h1v1h-1zM29 4h1v1h-1zM42 4h5v1h-5zM52 4h1v1h-1zM54 4h1v2h-1zM1 5h2v1h-2zM16 5h7v1h-7zM26 5h7v1h-7zM36 5h6v1h-6zM43 5h1v4h-1zM46 5h1v6h-1zM49 5h3v1h-3zM2 6h1v2h-1zM14 6h2v1h-2zM19 6h1v1h-1zM26 6h1v2h-1zM32 6h1v2h-1zM38 6h1v2h-1zM48 6h1v1h-1zM50 6h1v6h-1zM54 6h4v1h-4zM13 7h2v1h-2zM16 7h7v1h-7zM54 7h1v2h-1zM0 8h2v1h-2zM12 8h1v1h-1zM14 8h1v3h-1zM18 8h1v1h-1zM21 8h1v1h-1zM26 8h7v1h-7zM37 8h1v1h-1zM40 8h1v1h-1zM1 9h1v1h-1zM3 9h1v1h-1zM5 9h1v1h-1zM17 9h2v1h-2zM20 9h1v1h-1zM36 9h5v1h-5zM42 9h1v2h-1zM54 9h5v1h-5zM1 10h2v1h-2zM6 10h1v1h-1zM19 10h1v1h-1zM21 10h1v1h-1zM25 10h1v1h-1zM27 10h1v1h-1zM30 10h1v1h-1zM33 10h1v1h-1zM40 10h1v1h-1zM54 10h1v2h-1zM1 11h1v1h-1zM8 11h3v1h-3zM12 11h3v1h-3zM16 11h3v1h-3zM22 11h1v1h-1zM24 11h1v1h-1zM28 11h1v1h-1zM31 11h1v1h-1zM34 11h1v1h-1zM41 11h1v1h-1zM44 11h2v1h-2z"/></svg></div>
<svg class="g" style="left:50px;top:296px" width="12" height="12"><path fill="#808080" d="M4 0h4v1h-4zM2 1h2v1h-2zM8 1h2v1h-2zM1 2h1v1h-1zM1 3h1v1h-1zM0 4h1v1h-1zM0 5h1v1h-1zM0 6h1v1h-1zM0 7h1v1h-1zM1 8h1v1h-1zM1 9h1v1h-1z"/><path fill="#000" d="M4 1h4v1h-4zM2 2h2v1h-2zM8 2h1v1h-1zM2 3h1v1h-1zM1 4h1v1h-1zM5 4h2v1h-2zM1 5h1v1h-1zM4 5h4v1h-4zM1 6h1v1h-1zM4 6h4v1h-4zM1 7h1v1h-1zM5 7h2v1h-2zM2 8h1v1h-1z"/><path fill="#fff" d="M4 2h4v1h-4zM10 2h1v1h-1zM3 3h6v1h-6zM10 3h1v1h-1zM2 4h3v1h-3zM7 4h3v1h-3zM11 4h1v1h-1zM2 5h2v1h-2zM8 5h2v1h-2zM11 5h1v1h-1zM2 6h2v1h-2zM8 6h2v1h-2zM11 6h1v1h-1zM2 7h3v1h-3zM7 7h3v1h-3zM11 7h1v1h-1zM3 8h6v1h-6zM10 8h1v1h-1zM4 9h4v1h-4zM10 9h1v1h-1zM2 10h2v1h-2zM8 10h2v1h-2zM4 11h4v1h-4z"/><path fill="#dfdfdf" d="M9 2h1v1h-1zM9 3h1v1h-1zM10 4h1v1h-1zM10 5h1v1h-1zM10 6h1v1h-1zM10 7h1v1h-1zM9 8h1v1h-1zM2 9h2v1h-2zM8 9h2v1h-2zM4 10h4v1h-4z"/></svg>
<div class="t" style="left:66px;top:295px;width:72px;height:13px">测动作和返回<svg class="g" width="72" height="13"><path fill="#000" d="M0 1h1v1h-1zM2 1h5v1h-5zM10 1h1v10h-1zM19 1h1v3h-1zM27 1h1v2h-1zM29 1h1v2h-1zM40 1h2v1h-2zM49 1h1v1h-1zM57 1h2v1h-2zM61 1h10v1h-10zM1 2h2v1h-2zM6 2h1v6h-1zM8 2h1v7h-1zM13 2h4v1h-4zM37 2h3v1h-3zM50 2h1v2h-1zM53 2h4v1h-4zM61 2h1v8h-1zM70 2h1v8h-1zM2 3h1v2h-1zM4 3h1v6h-1zM26 3h1v2h-1zM29 3h6v1h-6zM39 3h1v1h-1zM43 3h4v1h-4zM53 3h1v1h-1zM0 4h1v1h-1zM18 4h5v1h-5zM28 4h1v1h-1zM30 4h1v2h-1zM36 4h6v1h-6zM43 4h1v6h-1zM46 4h1v6h-1zM53 4h6v1h-6zM64 4h4v1h-4zM1 5h2v1h-2zM12 5h6v1h-6zM19 5h1v4h-1zM22 5h1v6h-1zM25 5h3v1h-3zM39 5h1v1h-1zM48 5h3v1h-3zM53 5h2v1h-2zM58 5h1v1h-1zM64 5h1v2h-1zM67 5h1v2h-1zM2 6h1v2h-1zM14 6h1v2h-1zM24 6h1v1h-1zM26 6h1v6h-1zM30 6h4v1h-4zM38 6h3v1h-3zM50 6h1v4h-1zM53 6h1v2h-1zM55 6h1v1h-1zM57 6h1v1h-1zM30 7h1v2h-1zM38 7h2v1h-2zM41 7h1v2h-1zM56 7h1v1h-1zM64 7h4v1h-4zM0 8h2v1h-2zM13 8h1v1h-1zM16 8h1v1h-1zM37 8h1v1h-1zM39 8h1v4h-1zM52 8h1v1h-1zM55 8h1v1h-1zM57 8h1v1h-1zM64 8h1v1h-1zM67 8h1v1h-1zM1 9h1v1h-1zM3 9h1v1h-1zM5 9h1v1h-1zM12 9h5v1h-5zM18 9h1v2h-1zM30 9h5v1h-5zM36 9h1v1h-1zM53 9h2v1h-2zM58 9h1v1h-1zM1 10h2v1h-2zM6 10h1v1h-1zM16 10h1v1h-1zM30 10h1v2h-1zM43 10h4v1h-4zM49 10h1v1h-1zM51 10h1v1h-1zM61 10h10v1h-10zM1 11h1v1h-1zM8 11h3v1h-3zM17 11h1v1h-1zM20 11h2v1h-2zM48 11h1v1h-1zM52 11h7v1h-7zM61 11h1v1h-1zM70 11h1v1h-1z"/></svg></div>
<div style="left:219px;top:257px;width:153px;height:83px;border:1px solid #808080"></div>
<div style="left:220px;top:258px;width:151px;height:81px;border-top:1px solid #fff;border-left:1px solid #fff"></div>
<div style="left:219px;top:340px;width:154px;height:1px;background:#fff"></div>
<div style="left:372px;top:257px;width:1px;height:84px;background:#fff"></div>
<div style="left:226px;top:250px;width:52px;height:12px;background:#c4c2c6"></div>
<div class="t" style="left:228px;top:250px;width:48px;height:13px">试验方式<svg class="g" width="48" height="13"><path fill="#000" d="M1 1h1v1h-1zM7 1h1v2h-1zM9 1h1v1h-1zM12 1h4v1h-4zM19 1h1v2h-1zM28 1h1v1h-1zM42 1h1v3h-1zM44 1h1v1h-1zM2 2h1v1h-1zM10 2h1v1h-1zM15 2h1v2h-1zM29 2h1v1h-1zM45 2h1v1h-1zM3 3h8v1h-8zM13 3h1v3h-1zM18 3h1v1h-1zM20 3h1v1h-1zM24 3h11v1h-11zM7 4h1v1h-1zM15 4h3v1h-3zM21 4h2v1h-2zM28 4h1v2h-1zM36 4h11v1h-11zM0 5h3v1h-3zM4 5h4v1h-4zM15 5h1v1h-1zM18 5h3v1h-3zM42 5h1v3h-1zM2 6h1v4h-1zM5 6h1v3h-1zM7 6h1v2h-1zM13 6h4v1h-4zM28 6h5v1h-5zM37 6h4v1h-4zM16 7h1v1h-1zM18 7h1v1h-1zM21 7h1v2h-1zM27 7h1v2h-1zM32 7h1v4h-1zM39 7h1v3h-1zM8 8h1v2h-1zM10 8h1v2h-1zM14 8h4v1h-4zM19 8h1v1h-1zM43 8h1v2h-1zM5 9h2v1h-2zM12 9h2v1h-2zM16 9h1v2h-1zM18 9h1v1h-1zM20 9h1v1h-1zM26 9h1v1h-1zM46 9h1v2h-1zM2 10h3v1h-3zM9 10h2v1h-2zM19 10h1v1h-1zM25 10h1v1h-1zM39 10h2v1h-2zM44 10h1v1h-1zM2 11h1v1h-1zM10 11h1v1h-1zM14 11h2v1h-2zM17 11h6v1h-6zM24 11h1v1h-1zM29 11h3v1h-3zM36 11h3v1h-3zM45 11h2v1h-2z"/></svg></div>
<svg class="g" style="left:235px;top:267px" width="12" height="12"><path fill="#808080" d="M4 0h4v1h-4zM2 1h2v1h-2zM8 1h2v1h-2zM1 2h1v1h-1zM1 3h1v1h-1zM0 4h1v1h-1zM0 5h1v1h-1zM0 6h1v1h-1zM0 7h1v1h-1zM1 8h1v1h-1zM1 9h1v1h-1z"/><path fill="#000" d="M4 1h4v1h-4zM2 2h2v1h-2zM8 2h1v1h-1zM2 3h1v1h-1zM1 4h1v1h-1zM1 5h1v1h-1zM1 6h1v1h-1zM1 7h1v1h-1zM2 8h1v1h-1z"/><path fill="#fff" d="M4 2h4v1h-4zM10 2h1v1h-1zM3 3h6v1h-6zM10 3h1v1h-1zM2 4h8v1h-8zM11 4h1v1h-1zM2 5h8v1h-8zM11 5h1v1h-1zM2 6h8v1h-8zM11 6h1v1h-1zM2 7h8v1h-8zM11 7h1v1h-1zM3 8h6v1h-6zM10 8h1v1h-1zM4 9h4v1h-4zM10 9h1v1h-1zM2 10h2v1h-2zM8 10h2v1h-2zM4 11h4v1h-4z"/><path fill="#dfdfdf" d="M9 2h1v1h-1zM9 3h1v1h-1zM10 4h1v1h-1zM10 5h1v1h-1zM10 6h1v1h-1zM10 7h1v1h-1zM9 8h1v1h-1zM2 9h2v1h-2zM8 9h2v1h-2zM4 10h4v1h-4z"/></svg>
<div class="t" style="left:252px;top:267px;width:24px;height:13px">手动<svg class="g" width="24" height="13"><path fill="#000" d="M6 1h4v1h-4zM19 1h1v3h-1zM1 2h5v1h-5zM13 2h4v1h-4zM5 3h1v1h-1zM1 4h9v1h-9zM18 4h5v1h-5zM5 5h1v2h-1zM12 5h6v1h-6zM19 5h1v4h-1zM22 5h1v6h-1zM14 6h1v2h-1zM0 7h11v1h-11zM5 8h1v3h-1zM13 8h1v1h-1zM16 8h1v1h-1zM12 9h5v1h-5zM18 9h1v2h-1zM16 10h1v1h-1zM4 11h2v1h-2zM17 11h1v1h-1zM20 11h2v1h-2z"/></svg></div>
<svg class="g" style="left:235px;top:285px" width="12" height="12"><path fill="#808080" d="M4 0h4v1h-4zM2 1h2v1h-2zM8 1h2v1h-2zM1 2h1v1h-1zM1 3h1v1h-1zM0 4h1v1h-1zM0 5h1v1h-1zM0 6h1v1h-1zM0 7h1v1h-1zM1 8h1v1h-1zM1 9h1v1h-1z"/><path fill="#000" d="M4 1h4v1h-4zM2 2h2v1h-2zM8 2h1v1h-1zM2 3h1v1h-1zM1 4h1v1h-1zM5 4h2v1h-2zM1 5h1v1h-1zM4 5h4v1h-4zM1 6h1v1h-1zM4 6h4v1h-4zM1 7h1v1h-1zM5 7h2v1h-2zM2 8h1v1h-1z"/><path fill="#fff" d="M4 2h4v1h-4zM10 2h1v1h-1zM3 3h6v1h-6zM10 3h1v1h-1zM2 4h3v1h-3zM7 4h3v1h-3zM11 4h1v1h-1zM2 5h2v1h-2zM8 5h2v1h-2zM11 5h1v1h-1zM2 6h2v1h-2zM8 6h2v1h-2zM11 6h1v1h-1zM2 7h3v1h-3zM7 7h3v1h-3zM11 7h1v1h-1zM3 8h6v1h-6zM10 8h1v1h-1zM4 9h4v1h-4zM10 9h1v1h-1zM2 10h2v1h-2zM8 10h2v1h-2zM4 11h4v1h-4z"/><path fill="#dfdfdf" d="M9 2h1v1h-1zM9 3h1v1h-1zM10 4h1v1h-1zM10 5h1v1h-1zM10 6h1v1h-1zM10 7h1v1h-1zM9 8h1v1h-1zM2 9h2v1h-2zM8 9h2v1h-2zM4 10h4v1h-4z"/></svg>
<div class="t" style="left:252px;top:284px;width:36px;height:13px">自动加<svg class="g" width="36" height="13"><path fill="#000" d="M4 1h1v1h-1zM19 1h1v3h-1zM26 1h1v2h-1zM2 2h7v1h-7zM13 2h4v1h-4zM2 3h1v2h-1zM8 3h1v2h-1zM24 3h6v1h-6zM31 3h4v1h-4zM18 4h5v1h-5zM26 4h1v5h-1zM29 4h1v7h-1zM31 4h1v6h-1zM34 4h1v6h-1zM2 5h7v1h-7zM12 5h6v1h-6zM19 5h1v4h-1zM22 5h1v6h-1zM2 6h1v1h-1zM8 6h1v1h-1zM14 6h1v2h-1zM2 7h7v1h-7zM2 8h1v2h-1zM8 8h1v2h-1zM13 8h1v1h-1zM16 8h1v1h-1zM12 9h5v1h-5zM18 9h1v2h-1zM25 9h1v2h-1zM2 10h7v1h-7zM16 10h1v1h-1zM27 10h1v1h-1zM31 10h4v1h-4zM2 11h1v1h-1zM8 11h1v1h-1zM17 11h1v1h-1zM20 11h2v1h-2zM24 11h1v1h-1zM28 11h1v1h-1zM31 11h1v1h-1zM34 11h1v1h-1z"/></svg></div>
<svg class="g" style="left:235px;top:302px" width="12" height="12"><path fill="#808080" d="M4 0h4v1h-4zM2 1h2v1h-2zM8 1h2v1h-2zM1 2h1v1h-1zM1 3h1v1h-1zM0 4h1v1h-1zM0 5h1v1h-1zM0 6h1v1h-1zM0 7h1v1h-1zM1 8h1v1h-1zM1 9h1v1h-1z"/><path fill="#000" d="M4 1h4v1h-4zM2 2h2v1h-2zM8 2h1v1h-1zM2 3h1v1h-1zM1 4h1v1h-1zM1 5h1v1h-1zM1 6h1v1h-1zM1 7h1v1h-1zM2 8h1v1h-1z"/><path fill="#fff" d="M4 2h4v1h-4zM10 2h1v1h-1zM3 3h6v1h-6zM10 3h1v1h-1zM2 4h8v1h-8zM11 4h1v1h-1zM2 5h8v1h-8zM11 5h1v1h-1zM2 6h8v1h-8zM11 6h1v1h-1zM2 7h8v1h-8zM11 7h1v1h-1zM3 8h6v1h-6zM10 8h1v1h-1zM4 9h4v1h-4zM10 9h1v1h-1zM2 10h2v1h-2zM8 10h2v1h-2zM4 11h4v1h-4z"/><path fill="#dfdfdf" d="M9 2h1v1h-1zM9 3h1v1h-1zM10 4h1v1h-1zM10 5h1v1h-1zM10 6h1v1h-1zM10 7h1v1h-1zM9 8h1v1h-1zM2 9h2v1h-2zM8 9h2v1h-2zM4 10h4v1h-4z"/></svg>
<div class="t" style="left:252px;top:302px;width:36px;height:13px">自动减<svg class="g" width="36" height="13"><path fill="#000" d="M4 1h1v1h-1zM19 1h1v3h-1zM32 1h2v1h-2zM2 2h7v1h-7zM13 2h4v1h-4zM24 2h1v1h-1zM32 2h1v1h-1zM34 2h1v1h-1zM2 3h1v2h-1zM8 3h1v2h-1zM25 3h1v2h-1zM27 3h8v1h-8zM18 4h5v1h-5zM27 4h1v2h-1zM32 4h1v1h-1zM2 5h7v1h-7zM12 5h6v1h-6zM19 5h1v4h-1zM22 5h1v6h-1zM29 5h4v1h-4zM2 6h1v1h-1zM8 6h1v1h-1zM14 6h1v2h-1zM26 6h2v1h-2zM32 6h1v1h-1zM34 6h1v2h-1zM2 7h7v1h-7zM25 7h1v1h-1zM27 7h1v4h-1zM29 7h4v1h-4zM2 8h1v2h-1zM8 8h1v2h-1zM13 8h1v1h-1zM16 8h1v1h-1zM24 8h2v1h-2zM29 8h1v1h-1zM31 8h3v1h-3zM12 9h5v1h-5zM18 9h1v2h-1zM25 9h1v2h-1zM29 9h2v1h-2zM32 9h1v1h-1zM34 9h1v1h-1zM2 10h7v1h-7zM16 10h1v1h-1zM31 10h1v1h-1zM33 10h2v1h-2zM2 11h1v1h-1zM8 11h1v1h-1zM17 11h1v1h-1zM20 11h2v1h-2zM25 11h2v1h-2zM30 11h1v1h-1zM34 11h1v1h-1z"/></svg></div>
<div class="t" style="left:234px;top:320px;width:48px;height:13px">间隔时间<svg class="g" width="48" height="13"><path fill="#000" d="M2 1h1v1h-1zM5 1h6v1h-6zM12 1h3v1h-3zM16 1h7v1h-7zM32 1h1v2h-1zM38 1h1v1h-1zM41 1h6v1h-6zM3 2h1v1h-1zM10 2h1v9h-1zM12 2h1v2h-1zM14 2h1v2h-1zM17 2h1v1h-1zM21 2h1v1h-1zM24 2h4v1h-4zM39 2h1v1h-1zM46 2h1v9h-1zM1 3h1v9h-1zM17 3h5v1h-5zM24 3h1v3h-1zM27 3h8v1h-8zM37 3h1v9h-1zM4 4h4v1h-4zM12 4h2v1h-2zM27 4h1v2h-1zM32 4h1v7h-1zM40 4h4v1h-4zM4 5h1v1h-1zM7 5h1v1h-1zM12 5h1v4h-1zM14 5h1v4h-1zM16 5h7v1h-7zM29 5h1v1h-1zM40 5h1v1h-1zM43 5h1v1h-1zM4 6h4v1h-4zM16 6h1v2h-1zM18 6h1v1h-1zM20 6h1v1h-1zM22 6h1v2h-1zM24 6h4v1h-4zM30 6h1v2h-1zM40 6h4v1h-4zM4 7h1v2h-1zM7 7h1v2h-1zM19 7h1v1h-1zM24 7h1v3h-1zM27 7h1v3h-1zM40 7h1v2h-1zM43 7h1v2h-1zM16 8h7v1h-7zM4 9h4v1h-4zM12 9h3v1h-3zM16 9h1v3h-1zM19 9h1v2h-1zM22 9h1v2h-1zM40 9h4v1h-4zM12 10h1v2h-1zM24 10h4v1h-4zM8 11h3v1h-3zM21 11h2v1h-2zM30 11h3v1h-3zM44 11h3v1h-3z"/></svg></div>
<div style="left:289px;top:317px;width:54px;height:19px;background:#fff;border-top:1px solid #808080;border-left:1px solid #808080;border-right:1px solid #fff;border-bottom:1px solid #fff"></div>
<div style="left:290px;top:318px;width:52px;height:17px;border-top:1px solid #000;border-left:1px solid #000;border-right:1px solid #dfdfdf;border-bottom:1px solid #dfdfdf"></div>
<div class="t" style="left:291px;top:318px;width:24px;height:13px">1000<svg class="g" width="24" height="13"><path fill="#000" d="M3 3h1v1h-1zM8 3h3v1h-3zM14 3h3v1h-3zM20 3h3v1h-3zM2 4h2v1h-2zM7 4h1v6h-1zM11 4h1v6h-1zM13 4h1v6h-1zM17 4h1v6h-1zM19 4h1v6h-1zM23 4h1v6h-1zM3 5h1v5h-1zM2 10h3v1h-3zM8 10h3v1h-3zM14 10h3v1h-3zM20 10h3v1h-3z"/></svg></div>
<div class="t" style="left:351px;top:318px;width:12px;height:13px">ms<svg class="g" width="12" height="13"><path fill="#000" d="M0 6h4v1h-4zM7 6h4v1h-4zM0 7h1v4h-1zM2 7h1v4h-1zM4 7h1v4h-1zM6 7h1v1h-1zM7 8h3v1h-3zM10 9h1v1h-1zM6 10h4v1h-4z"/></svg></div>
<div style="left:373px;top:68px;width:1px;height:274px;background:#fff"></div>
<svg style="left:376px;top:68px" width="275" height="274" viewBox="0 0 275 274"><rect width="275" height="274" fill="#000"/><g stroke="#888888" stroke-width="1" fill="none" shape-rendering="crispEdges"><circle cx="141.5" cy="137.5" r="16.5"/><circle cx="141.5" cy="137.5" r="41.8"/><circle cx="141.5" cy="137.5" r="67.0"/><circle cx="141.5" cy="137.5" r="92.2"/><circle cx="141.5" cy="137.5" r="117.5"/><line x1="141.50" y1="137.50" x2="259.00" y2="137.50"/><line x1="155.79" y1="129.25" x2="243.26" y2="78.75"/><line x1="149.75" y1="123.21" x2="200.25" y2="35.74"/><line x1="141.50" y1="137.50" x2="141.50" y2="20.00"/><line x1="133.25" y1="123.21" x2="82.75" y2="35.74"/><line x1="127.21" y1="129.25" x2="39.74" y2="78.75"/><line x1="141.50" y1="137.50" x2="24.00" y2="137.50"/><line x1="127.21" y1="145.75" x2="39.74" y2="196.25"/><line x1="133.25" y1="151.79" x2="82.75" y2="239.26"/><line x1="141.50" y1="137.50" x2="141.50" y2="255.00"/><line x1="149.75" y1="151.79" x2="200.25" y2="239.26"/><line x1="155.79" y1="145.75" x2="243.26" y2="196.25"/></g><path d="M141.50 137.50L197.50 137.50M197.50 137.50L192.06 140.04M197.50 137.50L192.06 134.96" stroke="#ffff00" stroke-width="1.2" fill="none"/><path d="M141.50 137.50L155.50 137.50M155.50 137.50L150.06 140.04M155.50 137.50L150.06 134.96" stroke="#ffff00" stroke-width="1.6" fill="none"/><path d="M141.50 137.50L112.75 87.70M112.75 87.70L117.66 91.14M112.75 87.70L113.27 93.68" stroke="#ff2020" stroke-width="1.2" fill="none"/><path d="M141.50 137.50L134.50 125.38M134.50 125.38L139.41 128.82M134.50 125.38L135.02 131.35" stroke="#ff2020" stroke-width="1.6" fill="none"/><path d="M141.50 137.50L112.75 187.30M112.75 187.30L113.27 181.32M112.75 187.30L117.66 183.86" stroke="#20ff20" stroke-width="1.2" fill="none"/><path d="M141.50 137.50L134.50 149.62M134.50 149.62L135.02 143.65M134.50 149.62L139.41 146.18" stroke="#20ff20" stroke-width="1.6" fill="none"/><path d="M9 237.5H40 M35 234.5L40 237.5L35 240.5" stroke="#ffff40" stroke-width="1" fill="none"/><path d="M225 237.5H257 M252 234.5L257 237.5L252 240.5" stroke="#ffff40" stroke-width="2" fill="none"/><path d="M9 247.5H40 M35 244.5L40 247.5L35 250.5" stroke="#40ff40" stroke-width="1" fill="none"/><path d="M225 247.5H257 M252 244.5L257 247.5L252 250.5" stroke="#40ff40" stroke-width="2" fill="none"/><path d="M9 257.5H40 M35 254.5L40 257.5L35 260.5" stroke="#ff2020" stroke-width="1" fill="none"/><path d="M225 257.5H257 M252 254.5L257 257.5L252 260.5" stroke="#ff2020" stroke-width="2" fill="none"/></svg>
<svg class="g" style="left:418px;top:298px" width="17" height="9"><path fill="#ffff40" d="M0 0h1v1h-1zM5 0h1v1h-1zM11 0h1v1h-1zM0 1h1v1h-1zM5 1h1v1h-1zM10 1h1v1h-1zM12 1h1v1h-1zM0 2h1v1h-1zM5 2h1v1h-1zM10 2h1v1h-1zM12 2h1v1h-1zM0 3h1v1h-1zM5 3h1v1h-1zM9 3h1v1h-1zM13 3h1v1h-1zM0 4h1v1h-1zM5 4h1v1h-1zM9 4h1v1h-1zM13 4h1v1h-1zM0 5h1v1h-1zM5 5h1v1h-1zM9 5h5v1h-5zM0 6h1v1h-1zM5 6h1v1h-1zM8 6h1v1h-1zM14 6h1v1h-1zM0 7h1v1h-1zM5 7h1v1h-1zM8 7h1v1h-1zM14 7h1v1h-1zM1 8h4v1h-4zM8 8h1v1h-1zM14 8h1v1h-1z"/></svg>
<svg class="g" style="left:637px;top:298px" width="12" height="9"><path fill="#ffff40" d="M0 0h1v1h-1zM6 0h1v1h-1zM0 1h1v1h-1zM5 1h1v1h-1zM7 1h1v1h-1zM0 2h1v1h-1zM5 2h1v1h-1zM7 2h1v1h-1zM0 3h1v1h-1zM4 3h1v1h-1zM8 3h1v1h-1zM0 4h1v1h-1zM4 4h1v1h-1zM8 4h1v1h-1zM0 5h1v1h-1zM4 5h5v1h-5zM0 6h1v1h-1zM3 6h1v1h-1zM9 6h1v1h-1zM0 7h1v1h-1zM3 7h1v1h-1zM9 7h1v1h-1zM0 8h1v1h-1zM3 8h1v1h-1zM9 8h1v1h-1z"/></svg>
<svg class="g" style="left:418px;top:308px" width="16" height="9"><path fill="#40ff40" d="M0 0h1v1h-1zM5 0h1v1h-1zM8 0h5v1h-5zM0 1h1v1h-1zM5 1h1v1h-1zM8 1h1v1h-1zM13 1h1v1h-1zM0 2h1v1h-1zM5 2h1v1h-1zM8 2h1v1h-1zM13 2h1v1h-1zM0 3h1v1h-1zM5 3h1v1h-1zM8 3h1v1h-1zM13 3h1v1h-1zM0 4h1v1h-1zM5 4h1v1h-1zM8 4h5v1h-5zM0 5h1v1h-1zM5 5h1v1h-1zM8 5h1v1h-1zM13 5h1v1h-1zM0 6h1v1h-1zM5 6h1v1h-1zM8 6h1v1h-1zM13 6h1v1h-1zM0 7h1v1h-1zM5 7h1v1h-1zM8 7h1v1h-1zM13 7h1v1h-1zM1 8h4v1h-4zM8 8h5v1h-5z"/></svg>
<svg class="g" style="left:637px;top:308px" width="11" height="9"><path fill="#40ff40" d="M0 0h1v1h-1zM3 0h5v1h-5zM0 1h1v1h-1zM3 1h1v1h-1zM8 1h1v1h-1zM0 2h1v1h-1zM3 2h1v1h-1zM8 2h1v1h-1zM0 3h1v1h-1zM3 3h1v1h-1zM8 3h1v1h-1zM0 4h1v1h-1zM3 4h5v1h-5zM0 5h1v1h-1zM3 5h1v1h-1zM8 5h1v1h-1zM0 6h1v1h-1zM3 6h1v1h-1zM8 6h1v1h-1zM0 7h1v1h-1zM3 7h1v1h-1zM8 7h1v1h-1zM0 8h1v1h-1zM3 8h5v1h-5z"/></svg>
<svg class="g" style="left:418px;top:318px" width="17" height="9"><path fill="#ff2020" d="M0 0h1v1h-1zM5 0h1v1h-1zM10 0h4v1h-4zM0 1h1v1h-1zM5 1h1v1h-1zM9 1h1v1h-1zM14 1h1v1h-1zM0 2h1v1h-1zM5 2h1v1h-1zM8 2h1v1h-1zM0 3h1v1h-1zM5 3h1v1h-1zM8 3h1v1h-1zM0 4h1v1h-1zM5 4h1v1h-1zM8 4h1v1h-1zM0 5h1v1h-1zM5 5h1v1h-1zM8 5h1v1h-1zM0 6h1v1h-1zM5 6h1v1h-1zM8 6h1v1h-1zM0 7h1v1h-1zM5 7h1v1h-1zM9 7h1v1h-1zM14 7h1v1h-1zM1 8h4v1h-4zM10 8h4v1h-4z"/></svg>
<svg class="g" style="left:637px;top:318px" width="12" height="9"><path fill="#ff2020" d="M0 0h1v1h-1zM5 0h4v1h-4zM0 1h1v1h-1zM4 1h1v1h-1zM9 1h1v1h-1zM0 2h1v1h-1zM3 2h1v1h-1zM0 3h1v1h-1zM3 3h1v1h-1zM0 4h1v1h-1zM3 4h1v1h-1zM0 5h1v1h-1zM3 5h1v1h-1zM0 6h1v1h-1zM3 6h1v1h-1zM0 7h1v1h-1zM4 7h1v1h-1zM9 7h1v1h-1zM0 8h1v1h-1zM5 8h4v1h-4z"/></svg>
<div style="left:23px;top:318px;width:151px;height:139px;background:#ccffff;border-left:1px solid #000;border-top:1px solid #000;border-right:1px solid #fff;border-bottom:1px solid #fff"></div>
<div style="left:24px;top:319px;width:40px;height:15px;background:#c4c2c6;border-left:1px solid #fff;border-top:1px solid #fff;border-right:1px solid #000;border-bottom:1px solid #000"></div>
<div class="t" style="left:30px;top:320px;width:24px;height:13px">参量<svg class="g" width="24" height="13"><path fill="#000" d="M4 1h1v1h-1zM14 1h7v1h-7zM3 2h1v1h-1zM7 2h1v1h-1zM14 2h1v1h-1zM20 2h1v1h-1zM2 3h7v1h-7zM14 3h7v1h-7zM4 4h1v1h-1zM14 4h1v1h-1zM20 4h1v1h-1zM0 5h11v1h-11zM12 5h11v1h-11zM2 6h1v1h-1zM5 6h1v1h-1zM8 6h1v1h-1zM14 6h1v1h-1zM17 6h1v1h-1zM20 6h1v1h-1zM0 7h2v1h-2zM3 7h2v1h-2zM9 7h2v1h-2zM14 7h7v1h-7zM5 8h2v1h-2zM14 8h1v1h-1zM17 8h1v1h-1zM20 8h1v1h-1zM3 9h2v1h-2zM8 9h1v1h-1zM13 9h9v1h-9zM6 10h2v1h-2zM17 10h1v1h-1zM2 11h4v1h-4zM12 11h11v1h-11z"/></svg></div>
<div style="left:64px;top:319px;width:58px;height:15px;background:#c4c2c6;border-left:1px solid #fff;border-top:1px solid #fff;border-right:1px solid #000;border-bottom:1px solid #000"></div>
<div class="t" style="left:69px;top:320px;width:24px;height:13px">幅值<svg class="g" width="24" height="13"><path fill="#000" d="M2 1h1v2h-1zM5 1h6v1h-6zM15 1h1v1h-1zM19 1h1v1h-1zM15 2h8v1h-8zM0 3h5v1h-5zM6 3h4v1h-4zM14 3h1v2h-1zM18 3h1v1h-1zM0 4h1v5h-1zM2 4h1v4h-1zM4 4h1v3h-1zM6 4h1v1h-1zM9 4h1v1h-1zM17 4h5v1h-5zM6 5h4v1h-4zM13 5h2v1h-2zM17 5h1v1h-1zM21 5h1v1h-1zM12 6h1v1h-1zM14 6h1v6h-1zM17 6h5v1h-5zM4 7h7v1h-7zM17 7h1v1h-1zM21 7h1v2h-1zM2 8h4v1h-4zM7 8h1v1h-1zM10 8h1v1h-1zM17 8h3v1h-3zM2 9h1v3h-1zM5 9h6v1h-6zM17 9h1v2h-1zM19 9h3v1h-3zM5 10h1v1h-1zM7 10h1v1h-1zM10 10h1v1h-1zM21 10h1v1h-1zM5 11h6v1h-6zM16 11h7v1h-7z"/></svg></div>
<div style="left:122px;top:319px;width:50px;height:15px;background:#c4c2c6;border-left:1px solid #fff;border-top:1px solid #fff;border-right:1px solid #000;border-bottom:1px solid #000"></div>
<div class="t" style="left:128px;top:320px;width:24px;height:13px">相位<svg class="g" width="24" height="13"><path fill="#000" d="M3 1h1v2h-1zM6 1h5v1h-5zM15 1h1v2h-1zM18 1h1v1h-1zM6 2h1v1h-1zM10 2h1v2h-1zM19 2h1v1h-1zM1 3h6v1h-6zM14 3h1v2h-1zM3 4h1v2h-1zM6 4h5v1h-5zM16 4h7v1h-7zM6 5h1v2h-1zM10 5h1v2h-1zM13 5h2v1h-2zM2 6h3v1h-3zM12 6h1v1h-1zM14 6h1v6h-1zM17 6h1v1h-1zM21 6h1v2h-1zM1 7h1v1h-1zM3 7h1v5h-1zM5 7h6v1h-6zM18 7h1v2h-1zM0 8h1v1h-1zM6 8h1v2h-1zM10 8h1v2h-1zM20 8h1v2h-1zM6 10h5v1h-5zM19 10h1v1h-1zM6 11h1v1h-1zM10 11h1v1h-1zM16 11h7v1h-7z"/></svg></div>
<div style="left:64px;top:334px;width:1px;height:122px;background:#a8d0d0"></div>
<div style="left:122px;top:334px;width:1px;height:122px;background:#a8d0d0"></div>
<div style="left:172px;top:334px;width:1px;height:122px;background:#a8d0d0"></div>
<div style="left:24px;top:349px;width:148px;height:1px;background:#a8d0d0"></div>
<div style="left:24px;top:362px;width:148px;height:1px;background:#a8d0d0"></div>
<div style="left:24px;top:375px;width:148px;height:1px;background:#a8d0d0"></div>
<div style="left:24px;top:388px;width:148px;height:1px;background:#a8d0d0"></div>
<div style="left:24px;top:401px;width:148px;height:1px;background:#a8d0d0"></div>
<div style="left:24px;top:414px;width:148px;height:1px;background:#a8d0d0"></div>
<div style="left:24px;top:427px;width:148px;height:1px;background:#a8d0d0"></div>
<div style="left:24px;top:440px;width:148px;height:1px;background:#a8d0d0"></div>
<div style="left:24px;top:453px;width:148px;height:1px;background:#a8d0d0"></div>
<div class="t" style="left:28px;top:336px;width:18px;height:13px">UAB<svg class="g" width="18" height="13"><path fill="#000" d="M0 3h2v1h-2zM4 3h2v1h-2zM8 3h1v2h-1zM12 3h4v1h-4zM1 4h1v6h-1zM4 4h1v6h-1zM13 4h1v2h-1zM16 4h1v2h-1zM7 5h1v3h-1zM9 5h1v2h-1zM13 6h3v1h-3zM10 7h1v1h-1zM13 7h1v3h-1zM16 7h1v3h-1zM7 8h4v1h-4zM6 9h1v1h-1zM11 9h1v1h-1zM2 10h2v1h-2zM6 10h2v1h-2zM10 10h2v1h-2zM12 10h4v1h-4z"/></svg></div>
<div class="t" style="left:69px;top:336px;width:42px;height:13px">100.000<svg class="g" width="42" height="13"><path fill="#000" d="M3 3h1v1h-1zM8 3h3v1h-3zM14 3h3v1h-3zM26 3h3v1h-3zM32 3h3v1h-3zM38 3h3v1h-3zM2 4h2v1h-2zM7 4h1v6h-1zM11 4h1v6h-1zM13 4h1v6h-1zM17 4h1v6h-1zM25 4h1v6h-1zM29 4h1v6h-1zM31 4h1v6h-1zM35 4h1v6h-1zM37 4h1v6h-1zM41 4h1v6h-1zM3 5h1v5h-1zM2 10h3v1h-3zM8 10h3v1h-3zM14 10h3v1h-3zM20 10h1v1h-1zM26 10h3v1h-3zM32 10h3v1h-3zM38 10h3v1h-3z"/></svg></div>
<div class="t" style="left:127px;top:336px;width:24px;height:13px">30.0<svg class="g" width="24" height="13"><path fill="#000" d="M2 3h3v1h-3zM8 3h3v1h-3zM20 3h3v1h-3zM1 4h1v1h-1zM5 4h1v2h-1zM7 4h1v6h-1zM11 4h1v6h-1zM19 4h1v6h-1zM23 4h1v6h-1zM3 6h2v1h-2zM5 7h1v3h-1zM1 9h1v1h-1zM2 10h3v1h-3zM8 10h3v1h-3zM14 10h1v1h-1zM20 10h3v1h-3z"/></svg></div>
<div class="t" style="left:28px;top:349px;width:18px;height:13px">UBC<svg class="g" width="18" height="13"><path fill="#000" d="M0 3h2v1h-2zM4 3h2v1h-2zM6 3h4v1h-4zM13 3h4v1h-4zM1 4h1v6h-1zM4 4h1v6h-1zM7 4h1v2h-1zM10 4h1v2h-1zM12 4h1v6h-1zM16 4h1v1h-1zM7 6h3v1h-3zM7 7h1v3h-1zM10 7h1v3h-1zM16 9h1v1h-1zM2 10h2v1h-2zM6 10h4v1h-4zM13 10h3v1h-3z"/></svg></div>
<div class="t" style="left:69px;top:349px;width:42px;height:13px">100.000<svg class="g" width="42" height="13"><path fill="#000" d="M3 3h1v1h-1zM8 3h3v1h-3zM14 3h3v1h-3zM26 3h3v1h-3zM32 3h3v1h-3zM38 3h3v1h-3zM2 4h2v1h-2zM7 4h1v6h-1zM11 4h1v6h-1zM13 4h1v6h-1zM17 4h1v6h-1zM25 4h1v6h-1zM29 4h1v6h-1zM31 4h1v6h-1zM35 4h1v6h-1zM37 4h1v6h-1zM41 4h1v6h-1zM3 5h1v5h-1zM2 10h3v1h-3zM8 10h3v1h-3zM14 10h3v1h-3zM20 10h1v1h-1zM26 10h3v1h-3zM32 10h3v1h-3zM38 10h3v1h-3z"/></svg></div>
<div class="t" style="left:127px;top:349px;width:30px;height:13px">-90.0<svg class="g" width="30" height="13"><path fill="#000" d="M8 3h3v1h-3zM14 3h3v1h-3zM26 3h3v1h-3zM7 4h1v3h-1zM11 4h1v3h-1zM13 4h1v6h-1zM17 4h1v6h-1zM25 4h1v6h-1zM29 4h1v6h-1zM1 6h5v1h-5zM8 7h4v1h-4zM11 8h1v2h-1zM7 9h1v1h-1zM8 10h3v1h-3zM14 10h3v1h-3zM20 10h1v1h-1zM26 10h3v1h-3z"/></svg></div>
<div class="t" style="left:28px;top:362px;width:18px;height:13px">UCA<svg class="g" width="18" height="13"><path fill="#000" d="M0 3h2v1h-2zM4 3h2v1h-2zM7 3h4v1h-4zM14 3h1v2h-1zM1 4h1v6h-1zM4 4h1v6h-1zM6 4h1v6h-1zM10 4h1v1h-1zM13 5h1v3h-1zM15 5h1v2h-1zM16 7h1v1h-1zM13 8h4v1h-4zM10 9h1v1h-1zM12 9h1v1h-1zM17 9h1v1h-1zM2 10h2v1h-2zM7 10h3v1h-3zM12 10h2v1h-2zM16 10h2v1h-2z"/></svg></div>
<div class="t" style="left:69px;top:362px;width:42px;height:13px">100.000<svg class="g" width="42" height="13"><path fill="#000" d="M3 3h1v1h-1zM8 3h3v1h-3zM14 3h3v1h-3zM26 3h3v1h-3zM32 3h3v1h-3zM38 3h3v1h-3zM2 4h2v1h-2zM7 4h1v6h-1zM11 4h1v6h-1zM13 4h1v6h-1zM17 4h1v6h-1zM25 4h1v6h-1zM29 4h1v6h-1zM31 4h1v6h-1zM35 4h1v6h-1zM37 4h1v6h-1zM41 4h1v6h-1zM3 5h1v5h-1zM2 10h3v1h-3zM8 10h3v1h-3zM14 10h3v1h-3zM20 10h1v1h-1zM26 10h3v1h-3zM32 10h3v1h-3zM38 10h3v1h-3z"/></svg></div>
<div class="t" style="left:127px;top:362px;width:30px;height:13px">150.0<svg class="g" width="30" height="13"><path fill="#000" d="M3 3h1v1h-1zM7 3h5v1h-5zM14 3h3v1h-3zM26 3h3v1h-3zM2 4h2v1h-2zM7 4h1v2h-1zM13 4h1v6h-1zM17 4h1v6h-1zM25 4h1v6h-1zM29 4h1v6h-1zM3 5h1v5h-1zM7 6h4v1h-4zM11 7h1v3h-1zM7 9h1v1h-1zM2 10h3v1h-3zM8 10h3v1h-3zM14 10h3v1h-3zM20 10h1v1h-1zM26 10h3v1h-3z"/></svg></div>
<div class="t" style="left:28px;top:375px;width:12px;height:13px">Uo<svg class="g" width="12" height="13"><path fill="#000" d="M0 3h2v1h-2zM4 3h2v1h-2zM1 4h1v6h-1zM4 4h1v6h-1zM7 6h3v1h-3zM6 7h1v3h-1zM10 7h1v3h-1zM2 10h2v1h-2zM7 10h3v1h-3z"/></svg></div>
<div class="t" style="left:69px;top:375px;width:30px;height:13px">0.000<svg class="g" width="30" height="13"><path fill="#000" d="M2 3h3v1h-3zM14 3h3v1h-3zM20 3h3v1h-3zM26 3h3v1h-3zM1 4h1v6h-1zM5 4h1v6h-1zM13 4h1v6h-1zM17 4h1v6h-1zM19 4h1v6h-1zM23 4h1v6h-1zM25 4h1v6h-1zM29 4h1v6h-1zM2 10h3v1h-3zM8 10h1v1h-1zM14 10h3v1h-3zM20 10h3v1h-3zM26 10h3v1h-3z"/></svg></div>
<div class="t" style="left:127px;top:375px;width:30px;height:13px">180.0<svg class="g" width="30" height="13"><path fill="#000" d="M3 3h1v1h-1zM8 3h3v1h-3zM14 3h3v1h-3zM26 3h3v1h-3zM2 4h2v1h-2zM7 4h1v2h-1zM11 4h1v2h-1zM13 4h1v6h-1zM17 4h1v6h-1zM25 4h1v6h-1zM29 4h1v6h-1zM3 5h1v5h-1zM8 6h3v1h-3zM7 7h1v3h-1zM11 7h1v3h-1zM2 10h3v1h-3zM8 10h3v1h-3zM14 10h3v1h-3zM20 10h1v1h-1zM26 10h3v1h-3z"/></svg></div>
<div class="t" style="left:28px;top:388px;width:12px;height:13px">U+<svg class="g" width="12" height="13"><path fill="#000" d="M0 3h2v1h-2zM4 3h2v1h-2zM1 4h1v6h-1zM4 4h1v6h-1zM9 5h1v2h-1zM7 7h5v1h-5zM9 8h1v2h-1zM2 10h2v1h-2z"/></svg></div>
<div class="t" style="left:69px;top:388px;width:36px;height:13px">57.735<svg class="g" width="36" height="13"><path fill="#000" d="M1 3h5v1h-5zM7 3h5v1h-5zM19 3h5v1h-5zM26 3h3v1h-3zM31 3h5v1h-5zM1 4h1v2h-1zM7 4h1v1h-1zM11 4h1v1h-1zM19 4h1v1h-1zM23 4h1v1h-1zM25 4h1v1h-1zM29 4h1v2h-1zM31 4h1v2h-1zM10 5h1v2h-1zM22 5h1v2h-1zM1 6h4v1h-4zM27 6h2v1h-2zM31 6h4v1h-4zM5 7h1v3h-1zM9 7h1v4h-1zM21 7h1v4h-1zM29 7h1v3h-1zM35 7h1v3h-1zM1 9h1v1h-1zM25 9h1v1h-1zM31 9h1v1h-1zM2 10h3v1h-3zM14 10h1v1h-1zM26 10h3v1h-3zM32 10h3v1h-3z"/></svg></div>
<div class="t" style="left:127px;top:388px;width:18px;height:13px">0.0<svg class="g" width="18" height="13"><path fill="#000" d="M2 3h3v1h-3zM14 3h3v1h-3zM1 4h1v6h-1zM5 4h1v6h-1zM13 4h1v6h-1zM17 4h1v6h-1zM2 10h3v1h-3zM8 10h1v1h-1zM14 10h3v1h-3z"/></svg></div>
<div class="t" style="left:28px;top:401px;width:12px;height:13px">U-<svg class="g" width="12" height="13"><path fill="#000" d="M0 3h2v1h-2zM4 3h2v1h-2zM1 4h1v6h-1zM4 4h1v6h-1zM7 6h5v1h-5zM2 10h2v1h-2z"/></svg></div>
<div class="t" style="left:69px;top:401px;width:30px;height:13px">0.000<svg class="g" width="30" height="13"><path fill="#000" d="M2 3h3v1h-3zM14 3h3v1h-3zM20 3h3v1h-3zM26 3h3v1h-3zM1 4h1v6h-1zM5 4h1v6h-1zM13 4h1v6h-1zM17 4h1v6h-1zM19 4h1v6h-1zM23 4h1v6h-1zM25 4h1v6h-1zM29 4h1v6h-1zM2 10h3v1h-3zM8 10h1v1h-1zM14 10h3v1h-3zM20 10h3v1h-3zM26 10h3v1h-3z"/></svg></div>
<div class="t" style="left:127px;top:401px;width:18px;height:13px">0.0<svg class="g" width="18" height="13"><path fill="#000" d="M2 3h3v1h-3zM14 3h3v1h-3zM1 4h1v6h-1zM5 4h1v6h-1zM13 4h1v6h-1zM17 4h1v6h-1zM2 10h3v1h-3zM8 10h1v1h-1zM14 10h3v1h-3z"/></svg></div>
<div class="t" style="left:28px;top:414px;width:12px;height:13px">Io<svg class="g" width="12" height="13"><path fill="#000" d="M0 3h5v1h-5zM2 4h1v6h-1zM7 6h3v1h-3zM6 7h1v3h-1zM10 7h1v3h-1zM0 10h5v1h-5zM7 10h3v1h-3z"/></svg></div>
<div class="t" style="left:69px;top:414px;width:30px;height:13px">0.000<svg class="g" width="30" height="13"><path fill="#000" d="M2 3h3v1h-3zM14 3h3v1h-3zM20 3h3v1h-3zM26 3h3v1h-3zM1 4h1v6h-1zM5 4h1v6h-1zM13 4h1v6h-1zM17 4h1v6h-1zM19 4h1v6h-1zM23 4h1v6h-1zM25 4h1v6h-1zM29 4h1v6h-1zM2 10h3v1h-3zM8 10h1v1h-1zM14 10h3v1h-3zM20 10h3v1h-3zM26 10h3v1h-3z"/></svg></div>
<div class="t" style="left:127px;top:414px;width:30px;height:13px">180.0<svg class="g" width="30" height="13"><path fill="#000" d="M3 3h1v1h-1zM8 3h3v1h-3zM14 3h3v1h-3zM26 3h3v1h-3zM2 4h2v1h-2zM7 4h1v2h-1zM11 4h1v2h-1zM13 4h1v6h-1zM17 4h1v6h-1zM25 4h1v6h-1zM29 4h1v6h-1zM3 5h1v5h-1zM8 6h3v1h-3zM7 7h1v3h-1zM11 7h1v3h-1zM2 10h3v1h-3zM8 10h3v1h-3zM14 10h3v1h-3zM20 10h1v1h-1zM26 10h3v1h-3z"/></svg></div>
<div class="t" style="left:28px;top:427px;width:12px;height:13px">I+<svg class="g" width="12" height="13"><path fill="#000" d="M0 3h5v1h-5zM2 4h1v6h-1zM9 5h1v2h-1zM7 7h5v1h-5zM9 8h1v2h-1zM0 10h5v1h-5z"/></svg></div>
<div class="t" style="left:69px;top:427px;width:30px;height:13px">5.000<svg class="g" width="30" height="13"><path fill="#000" d="M1 3h5v1h-5zM14 3h3v1h-3zM20 3h3v1h-3zM26 3h3v1h-3zM1 4h1v2h-1zM13 4h1v6h-1zM17 4h1v6h-1zM19 4h1v6h-1zM23 4h1v6h-1zM25 4h1v6h-1zM29 4h1v6h-1zM1 6h4v1h-4zM5 7h1v3h-1zM1 9h1v1h-1zM2 10h3v1h-3zM8 10h1v1h-1zM14 10h3v1h-3zM20 10h3v1h-3zM26 10h3v1h-3z"/></svg></div>
<div class="t" style="left:127px;top:427px;width:18px;height:13px">0.0<svg class="g" width="18" height="13"><path fill="#000" d="M2 3h3v1h-3zM14 3h3v1h-3zM1 4h1v6h-1zM5 4h1v6h-1zM13 4h1v6h-1zM17 4h1v6h-1zM2 10h3v1h-3zM8 10h1v1h-1zM14 10h3v1h-3z"/></svg></div>
<div class="t" style="left:28px;top:440px;width:12px;height:13px">I-<svg class="g" width="12" height="13"><path fill="#000" d="M0 3h5v1h-5zM2 4h1v6h-1zM7 6h5v1h-5zM0 10h5v1h-5z"/></svg></div>
<div class="t" style="left:69px;top:440px;width:30px;height:13px">0.000<svg class="g" width="30" height="13"><path fill="#000" d="M2 3h3v1h-3zM14 3h3v1h-3zM20 3h3v1h-3zM26 3h3v1h-3zM1 4h1v6h-1zM5 4h1v6h-1zM13 4h1v6h-1zM17 4h1v6h-1zM19 4h1v6h-1zM23 4h1v6h-1zM25 4h1v6h-1zM29 4h1v6h-1zM2 10h3v1h-3zM8 10h1v1h-1zM14 10h3v1h-3zM20 10h3v1h-3zM26 10h3v1h-3z"/></svg></div>
<div class="t" style="left:127px;top:440px;width:18px;height:13px">0.0<svg class="g" width="18" height="13"><path fill="#000" d="M2 3h3v1h-3zM14 3h3v1h-3zM1 4h1v6h-1zM5 4h1v6h-1zM13 4h1v6h-1zM17 4h1v6h-1zM2 10h3v1h-3zM8 10h1v1h-1zM14 10h3v1h-3z"/></svg></div>
<div style="left:221px;top:344px;width:171px;height:113px;background:#ffe8ff;border-left:1px solid #000;border-top:1px solid #000;border-right:1px solid #fff;border-bottom:1px solid #fff"></div>
<div style="left:222px;top:345px;width:48px;height:15px;background:#c4c2c6;border-left:1px solid #fff;border-top:1px solid #fff;border-right:1px solid #000;border-bottom:1px solid #000"></div>
<div class="t" style="left:228px;top:346px;width:36px;height:13px">开入量<svg class="g" width="36" height="13"><path fill="#000" d="M1 1h9v1h-9zM15 1h2v1h-2zM26 1h7v1h-7zM3 2h1v4h-1zM7 2h1v4h-1zM17 2h1v3h-1zM26 2h1v1h-1zM32 2h1v1h-1zM26 3h7v1h-7zM26 4h1v1h-1zM32 4h1v1h-1zM16 5h1v2h-1zM18 5h1v2h-1zM24 5h11v1h-11zM0 6h11v1h-11zM26 6h1v1h-1zM29 6h1v1h-1zM32 6h1v1h-1zM3 7h1v1h-1zM7 7h1v5h-1zM15 7h1v2h-1zM19 7h1v2h-1zM26 7h7v1h-7zM2 8h1v2h-1zM26 8h1v1h-1zM29 8h1v1h-1zM32 8h1v1h-1zM14 9h1v1h-1zM20 9h1v1h-1zM25 9h9v1h-9zM1 10h1v1h-1zM13 10h1v1h-1zM21 10h1v1h-1zM29 10h1v1h-1zM0 11h1v1h-1zM12 11h1v1h-1zM22 11h1v1h-1zM24 11h11v1h-11z"/></svg></div>
<div style="left:270px;top:345px;width:60px;height:15px;background:#c4c2c6;border-left:1px solid #fff;border-top:1px solid #fff;border-right:1px solid #000;border-bottom:1px solid #000"></div>
<div class="t" style="left:276px;top:346px;width:48px;height:13px">动作时间<svg class="g" width="48" height="13"><path fill="#000" d="M7 1h1v3h-1zM15 1h1v2h-1zM17 1h1v2h-1zM32 1h1v2h-1zM38 1h1v1h-1zM41 1h6v1h-6zM1 2h4v1h-4zM24 2h4v1h-4zM39 2h1v1h-1zM46 2h1v9h-1zM14 3h1v2h-1zM17 3h6v1h-6zM24 3h1v3h-1zM27 3h8v1h-8zM37 3h1v9h-1zM6 4h5v1h-5zM16 4h1v1h-1zM18 4h1v2h-1zM27 4h1v2h-1zM32 4h1v7h-1zM40 4h4v1h-4zM0 5h6v1h-6zM7 5h1v4h-1zM10 5h1v6h-1zM13 5h3v1h-3zM29 5h1v1h-1zM40 5h1v1h-1zM43 5h1v1h-1zM2 6h1v2h-1zM12 6h1v1h-1zM14 6h1v6h-1zM18 6h4v1h-4zM24 6h4v1h-4zM30 6h1v2h-1zM40 6h4v1h-4zM18 7h1v2h-1zM24 7h1v3h-1zM27 7h1v3h-1zM40 7h1v2h-1zM43 7h1v2h-1zM1 8h1v1h-1zM4 8h1v1h-1zM0 9h5v1h-5zM6 9h1v2h-1zM18 9h5v1h-5zM40 9h4v1h-4zM4 10h1v1h-1zM18 10h1v2h-1zM24 10h4v1h-4zM5 11h1v1h-1zM8 11h2v1h-2zM30 11h3v1h-3zM44 11h3v1h-3z"/></svg></div>
<div style="left:330px;top:345px;width:60px;height:15px;background:#c4c2c6;border-left:1px solid #fff;border-top:1px solid #fff;border-right:1px solid #000;border-bottom:1px solid #000"></div>
<div class="t" style="left:336px;top:346px;width:48px;height:13px">返回时间<svg class="g" width="48" height="13"><path fill="#000" d="M1 1h1v1h-1zM9 1h2v1h-2zM13 1h10v1h-10zM32 1h1v2h-1zM38 1h1v1h-1zM41 1h6v1h-6zM2 2h1v2h-1zM5 2h4v1h-4zM13 2h1v8h-1zM22 2h1v8h-1zM24 2h4v1h-4zM39 2h1v1h-1zM46 2h1v9h-1zM5 3h1v1h-1zM24 3h1v3h-1zM27 3h8v1h-8zM37 3h1v9h-1zM5 4h6v1h-6zM16 4h4v1h-4zM27 4h1v2h-1zM32 4h1v7h-1zM40 4h4v1h-4zM0 5h3v1h-3zM5 5h2v1h-2zM10 5h1v1h-1zM16 5h1v2h-1zM19 5h1v2h-1zM29 5h1v1h-1zM40 5h1v1h-1zM43 5h1v1h-1zM2 6h1v4h-1zM5 6h1v2h-1zM7 6h1v1h-1zM9 6h1v1h-1zM24 6h4v1h-4zM30 6h1v2h-1zM40 6h4v1h-4zM8 7h1v1h-1zM16 7h4v1h-4zM24 7h1v3h-1zM27 7h1v3h-1zM40 7h1v2h-1zM43 7h1v2h-1zM4 8h1v1h-1zM7 8h1v1h-1zM9 8h1v1h-1zM16 8h1v1h-1zM19 8h1v1h-1zM5 9h2v1h-2zM10 9h1v1h-1zM40 9h4v1h-4zM1 10h1v1h-1zM3 10h1v1h-1zM13 10h10v1h-10zM24 10h4v1h-4zM0 11h1v1h-1zM4 11h7v1h-7zM13 11h1v1h-1zM22 11h1v1h-1zM30 11h3v1h-3zM44 11h3v1h-3z"/></svg></div>
<div style="left:270px;top:360px;width:1px;height:96px;background:#d0c0d0"></div>
<div style="left:330px;top:360px;width:1px;height:96px;background:#d0c0d0"></div>
<div style="left:390px;top:360px;width:1px;height:96px;background:#d0c0d0"></div>
<div style="left:222px;top:375px;width:168px;height:1px;background:#d0c0d0"></div>
<div style="left:222px;top:388px;width:168px;height:1px;background:#d0c0d0"></div>
<div style="left:222px;top:401px;width:168px;height:1px;background:#d0c0d0"></div>
<div style="left:222px;top:414px;width:168px;height:1px;background:#d0c0d0"></div>
<div style="left:222px;top:427px;width:168px;height:1px;background:#d0c0d0"></div>
<div style="left:222px;top:440px;width:168px;height:1px;background:#d0c0d0"></div>
<div style="left:222px;top:453px;width:168px;height:1px;background:#d0c0d0"></div>
<div class="t" style="left:226px;top:362px;width:6px;height:13px">A<svg class="g" width="6" height="13"><path fill="#000" d="M2 3h1v2h-1zM1 5h1v3h-1zM3 5h1v2h-1zM4 7h1v1h-1zM1 8h4v1h-4zM0 9h1v1h-1zM5 9h1v1h-1zM0 10h2v1h-2zM4 10h2v1h-2z"/></svg></div>
<div class="t" style="left:226px;top:375px;width:6px;height:13px">B<svg class="g" width="6" height="13"><path fill="#000" d="M0 3h4v1h-4zM1 4h1v2h-1zM4 4h1v2h-1zM1 6h3v1h-3zM1 7h1v3h-1zM4 7h1v3h-1zM0 10h4v1h-4z"/></svg></div>
<div class="t" style="left:226px;top:388px;width:6px;height:13px">C<svg class="g" width="6" height="13"><path fill="#000" d="M1 3h4v1h-4zM0 4h1v6h-1zM4 4h1v1h-1zM4 9h1v1h-1zM1 10h3v1h-3z"/></svg></div>
<div class="t" style="left:226px;top:401px;width:6px;height:13px">R<svg class="g" width="6" height="13"><path fill="#000" d="M0 3h4v1h-4zM1 4h1v2h-1zM4 4h1v2h-1zM1 6h3v1h-3zM1 7h1v3h-1zM3 7h1v1h-1zM4 8h1v2h-1zM0 10h2v1h-2zM4 10h2v1h-2z"/></svg></div>
<div class="t" style="left:226px;top:414px;width:6px;height:13px">a<svg class="g" width="6" height="13"><path fill="#000" d="M1 6h3v1h-3zM4 7h1v1h-1zM1 8h4v1h-4zM0 9h1v1h-1zM4 9h1v1h-1zM1 10h4v1h-4z"/></svg></div>
<div class="t" style="left:226px;top:427px;width:6px;height:13px">b<svg class="g" width="6" height="13"><path fill="#000" d="M0 3h2v1h-2zM1 4h1v2h-1zM1 6h3v1h-3zM1 7h1v3h-1zM4 7h1v3h-1zM0 10h1v1h-1zM2 10h2v1h-2z"/></svg></div>
<div class="t" style="left:226px;top:440px;width:6px;height:13px">c<svg class="g" width="6" height="13"><path fill="#000" d="M1 6h4v1h-4zM0 7h1v3h-1zM4 7h1v1h-1zM4 9h1v1h-1zM1 10h3v1h-3z"/></svg></div>
<div style="left:395px;top:344px;width:258px;height:113px;background:#ffe8ff;border-left:1px solid #000;border-top:1px solid #000;border-right:1px solid #fff;border-bottom:1px solid #fff"></div>
<div style="left:396px;top:345px;width:22px;height:15px;background:#c4c2c6;border-left:1px solid #fff;border-top:1px solid #fff;border-right:1px solid #000;border-bottom:1px solid #000"></div>
<div style="left:418px;top:345px;width:42px;height:15px;background:#c4c2c6;border-left:1px solid #fff;border-top:1px solid #fff;border-right:1px solid #000;border-bottom:1px solid #000"></div>
<div class="t" style="left:425px;top:346px;width:24px;height:13px">参量<svg class="g" width="24" height="13"><path fill="#000" d="M4 1h1v1h-1zM14 1h7v1h-7zM3 2h1v1h-1zM7 2h1v1h-1zM14 2h1v1h-1zM20 2h1v1h-1zM2 3h7v1h-7zM14 3h7v1h-7zM4 4h1v1h-1zM14 4h1v1h-1zM20 4h1v1h-1zM0 5h11v1h-11zM12 5h11v1h-11zM2 6h1v1h-1zM5 6h1v1h-1zM8 6h1v1h-1zM14 6h1v1h-1zM17 6h1v1h-1zM20 6h1v1h-1zM0 7h2v1h-2zM3 7h2v1h-2zM9 7h2v1h-2zM14 7h7v1h-7zM5 8h2v1h-2zM14 8h1v1h-1zM17 8h1v1h-1zM20 8h1v1h-1zM3 9h2v1h-2zM8 9h1v1h-1zM13 9h9v1h-9zM6 10h2v1h-2zM17 10h1v1h-1zM2 11h4v1h-4zM12 11h11v1h-11z"/></svg></div>
<div style="left:460px;top:345px;width:55px;height:15px;background:#c4c2c6;border-left:1px solid #fff;border-top:1px solid #fff;border-right:1px solid #000;border-bottom:1px solid #000"></div>
<div class="t" style="left:466px;top:346px;width:24px;height:13px">动作<svg class="g" width="24" height="13"><path fill="#000" d="M7 1h1v3h-1zM15 1h1v2h-1zM17 1h1v2h-1zM1 2h4v1h-4zM14 3h1v2h-1zM17 3h6v1h-6zM6 4h5v1h-5zM16 4h1v1h-1zM18 4h1v2h-1zM0 5h6v1h-6zM7 5h1v4h-1zM10 5h1v6h-1zM13 5h3v1h-3zM2 6h1v2h-1zM12 6h1v1h-1zM14 6h1v6h-1zM18 6h4v1h-4zM18 7h1v2h-1zM1 8h1v1h-1zM4 8h1v1h-1zM0 9h5v1h-5zM6 9h1v2h-1zM18 9h5v1h-5zM4 10h1v1h-1zM18 10h1v2h-1zM5 11h1v1h-1zM8 11h2v1h-2z"/></svg></div>
<div style="left:515px;top:345px;width:55px;height:15px;background:#c4c2c6;border-left:1px solid #fff;border-top:1px solid #fff;border-right:1px solid #000;border-bottom:1px solid #000"></div>
<div class="t" style="left:521px;top:346px;width:24px;height:13px">返回<svg class="g" width="24" height="13"><path fill="#000" d="M1 1h1v1h-1zM9 1h2v1h-2zM13 1h10v1h-10zM2 2h1v2h-1zM5 2h4v1h-4zM13 2h1v8h-1zM22 2h1v8h-1zM5 3h1v1h-1zM5 4h6v1h-6zM16 4h4v1h-4zM0 5h3v1h-3zM5 5h2v1h-2zM10 5h1v1h-1zM16 5h1v2h-1zM19 5h1v2h-1zM2 6h1v4h-1zM5 6h1v2h-1zM7 6h1v1h-1zM9 6h1v1h-1zM8 7h1v1h-1zM16 7h4v1h-4zM4 8h1v1h-1zM7 8h1v1h-1zM9 8h1v1h-1zM16 8h1v1h-1zM19 8h1v1h-1zM5 9h2v1h-2zM10 9h1v1h-1zM1 10h1v1h-1zM3 10h1v1h-1zM13 10h10v1h-10zM0 11h1v1h-1zM4 11h7v1h-7zM13 11h1v1h-1zM22 11h1v1h-1z"/></svg></div>
<div style="left:570px;top:345px;width:60px;height:15px;background:#c4c2c6;border-left:1px solid #fff;border-top:1px solid #fff;border-right:1px solid #000;border-bottom:1px solid #000"></div>
<div class="t" style="left:576px;top:346px;width:48px;height:13px">返回系数<svg class="g" width="48" height="13"><path fill="#000" d="M1 1h1v1h-1zM9 1h2v1h-2zM13 1h10v1h-10zM31 1h3v1h-3zM36 1h1v1h-1zM39 1h1v1h-1zM41 1h1v1h-1zM43 1h1v2h-1zM2 2h1v2h-1zM5 2h4v1h-4zM13 2h1v8h-1zM22 2h1v8h-1zM25 2h6v1h-6zM37 2h1v1h-1zM39 2h2v1h-2zM5 3h1v1h-1zM28 3h1v1h-1zM32 3h1v1h-1zM36 3h6v1h-6zM43 3h4v1h-4zM5 4h6v1h-6zM16 4h4v1h-4zM26 4h6v1h-6zM38 4h2v1h-2zM42 4h2v1h-2zM45 4h1v5h-1zM0 5h3v1h-3zM5 5h2v1h-2zM10 5h1v1h-1zM16 5h1v2h-1zM19 5h1v2h-1zM29 5h1v1h-1zM37 5h1v1h-1zM39 5h2v1h-2zM43 5h1v4h-1zM2 6h1v4h-1zM5 6h1v2h-1zM7 6h1v1h-1zM9 6h1v1h-1zM28 6h1v1h-1zM32 6h1v1h-1zM36 6h1v1h-1zM39 6h1v1h-1zM41 6h1v1h-1zM8 7h1v1h-1zM16 7h4v1h-4zM25 7h9v1h-9zM36 7h6v1h-6zM4 8h1v1h-1zM7 8h1v1h-1zM9 8h1v1h-1zM16 8h1v1h-1zM19 8h1v1h-1zM29 8h1v3h-1zM33 8h1v1h-1zM38 8h1v1h-1zM40 8h1v2h-1zM5 9h2v1h-2zM10 9h1v1h-1zM27 9h1v1h-1zM31 9h1v1h-1zM37 9h2v1h-2zM44 9h1v1h-1zM1 10h1v1h-1zM3 10h1v1h-1zM13 10h10v1h-10zM26 10h1v1h-1zM32 10h1v1h-1zM39 10h1v1h-1zM43 10h1v1h-1zM45 10h1v1h-1zM0 11h1v1h-1zM4 11h7v1h-7zM13 11h1v1h-1zM22 11h1v1h-1zM25 11h1v1h-1zM28 11h2v1h-2zM33 11h1v1h-1zM36 11h3v1h-3zM40 11h3v1h-3zM46 11h1v1h-1z"/></svg></div>
<div style="left:418px;top:360px;width:1px;height:96px;background:#d0c0d0"></div>
<div style="left:460px;top:360px;width:1px;height:96px;background:#d0c0d0"></div>
<div style="left:515px;top:360px;width:1px;height:96px;background:#d0c0d0"></div>
<div style="left:570px;top:360px;width:1px;height:96px;background:#d0c0d0"></div>
<div style="left:630px;top:360px;width:1px;height:96px;background:#d0c0d0"></div>
<div style="left:631px;top:345px;width:21px;height:111px;background:#c4c2c6"></div>
<div style="left:396px;top:379px;width:234px;height:1px;background:#d0c0d0"></div>
<div style="left:396px;top:396px;width:234px;height:1px;background:#d0c0d0"></div>
<div style="left:396px;top:413px;width:234px;height:1px;background:#d0c0d0"></div>
<div style="left:396px;top:430px;width:234px;height:1px;background:#d0c0d0"></div>
<div style="left:396px;top:447px;width:234px;height:1px;background:#d0c0d0"></div>
<div style="left:401px;top:365px;width:12px;height:13px;background:#fff;border:2px solid #000;"></div>
<div class="t" style="left:424px;top:365px;width:12px;height:13px">UA<svg class="g" width="12" height="13"><path fill="#000" d="M0 3h2v1h-2zM4 3h2v1h-2zM8 3h1v2h-1zM1 4h1v6h-1zM4 4h1v6h-1zM7 5h1v3h-1zM9 5h1v2h-1zM10 7h1v1h-1zM7 8h4v1h-4zM6 9h1v1h-1zM11 9h1v1h-1zM2 10h2v1h-2zM6 10h2v1h-2zM10 10h2v1h-2z"/></svg></div>
<div style="left:401px;top:382px;width:12px;height:13px;background:#fff;border:2px solid #000;"></div>
<div class="t" style="left:424px;top:382px;width:12px;height:13px">UB<svg class="g" width="12" height="13"><path fill="#000" d="M0 3h2v1h-2zM4 3h2v1h-2zM6 3h4v1h-4zM1 4h1v6h-1zM4 4h1v6h-1zM7 4h1v2h-1zM10 4h1v2h-1zM7 6h3v1h-3zM7 7h1v3h-1zM10 7h1v3h-1zM2 10h2v1h-2zM6 10h4v1h-4z"/></svg></div>
<div style="left:401px;top:399px;width:12px;height:13px;background:#fff;border:2px solid #000;"></div>
<div class="t" style="left:424px;top:399px;width:12px;height:13px">UC<svg class="g" width="12" height="13"><path fill="#000" d="M0 3h2v1h-2zM4 3h2v1h-2zM7 3h4v1h-4zM1 4h1v6h-1zM4 4h1v6h-1zM6 4h1v6h-1zM10 4h1v1h-1zM10 9h1v1h-1zM2 10h2v1h-2zM7 10h3v1h-3z"/></svg></div>
<div style="left:401px;top:416px;width:12px;height:13px;background:#fff;border:2px solid #000;"></div>
<div class="t" style="left:424px;top:416px;width:12px;height:13px">IA<svg class="g" width="12" height="13"><path fill="#000" d="M0 3h5v1h-5zM8 3h1v2h-1zM2 4h1v6h-1zM7 5h1v3h-1zM9 5h1v2h-1zM10 7h1v1h-1zM7 8h4v1h-4zM6 9h1v1h-1zM11 9h1v1h-1zM0 10h5v1h-5zM6 10h2v1h-2zM10 10h2v1h-2z"/></svg></div>
<div style="left:401px;top:433px;width:12px;height:13px;background:#fff;border:2px solid #000;"></div>
<div class="t" style="left:424px;top:433px;width:12px;height:13px">IB<svg class="g" width="12" height="13"><path fill="#000" d="M0 3h5v1h-5zM6 3h4v1h-4zM2 4h1v6h-1zM7 4h1v2h-1zM10 4h1v2h-1zM7 6h3v1h-3zM7 7h1v3h-1zM10 7h1v3h-1zM0 10h5v1h-5zM6 10h4v1h-4z"/></svg></div>
<div style="left:401px;top:450px;width:12px;height:6px;background:#fff;border:2px solid #000;border-bottom:none"></div>
<div class="t" style="left:424px;top:450px;width:12px;height:5px">IC<svg class="g" width="12" height="5" style="overflow:hidden"><path fill="#000" d="M0 3h5v1h-5zM7 3h4v1h-4zM2 4h1v6h-1zM6 4h1v6h-1zM10 4h1v1h-1zM10 9h1v1h-1zM0 10h5v1h-5zM7 10h3v1h-3z"/></svg></div>
<div style="left:633px;top:345px;width:16px;height:110px;background-color:#e0e0e0;background-image:repeating-conic-gradient(#c4c2c6 0 25%,#fff 0 50%);background-size:2px 2px"></div>
<div style="left:633px;top:345px;width:16px;height:15px;background:#c4c2c6;border-top:1px solid #fff;border-left:1px solid #fff;border-right:1px solid #000;border-bottom:1px solid #000"></div>
<div style="left:634px;top:346px;width:14px;height:13px;border-right:1px solid #808080;border-bottom:1px solid #808080"></div>
<svg style="left:633px;top:345px" width="16" height="15" viewBox="0 0 16 15"><path d="M4 9h7l-3.5 -4z" fill="#000"/></svg>
<div style="left:633px;top:360px;width:16px;height:13px;background:#c4c2c6;border-top:1px solid #fff;border-left:1px solid #fff;border-right:1px solid #000;border-bottom:1px solid #000"></div>
<div style="left:634px;top:361px;width:14px;height:11px;border-right:1px solid #808080;border-bottom:1px solid #808080"></div>
<div style="left:633px;top:439px;width:16px;height:16px;background:#c4c2c6;border-top:1px solid #fff;border-left:1px solid #fff;border-right:1px solid #000;border-bottom:1px solid #000"></div>
<div style="left:634px;top:440px;width:14px;height:14px;border-right:1px solid #808080;border-bottom:1px solid #808080"></div>
<svg style="left:633px;top:439px" width="16" height="16" viewBox="0 0 16 16"><path d="M4 6h7l-3.5 4z" fill="#000"/></svg>
<div class="t" style="left:22px;top:463px;width:24px;height:13px">就绪<svg class="g" width="24" height="13"><path fill="#000" d="M3 1h1v1h-1zM7 1h1v3h-1zM14 1h1v2h-1zM19 1h1v1h-1zM0 2h6v1h-6zM9 2h1v1h-1zM17 2h4v1h-4zM22 2h1v1h-1zM10 3h1v1h-1zM13 3h1v2h-1zM16 3h1v1h-1zM19 3h1v1h-1zM21 3h1v1h-1zM1 4h10v1h-10zM15 4h1v1h-1zM17 4h6v1h-6zM1 5h1v1h-1zM4 5h1v1h-1zM6 5h1v4h-1zM8 5h1v6h-1zM12 5h3v1h-3zM19 5h1v1h-1zM1 6h4v1h-4zM14 6h1v1h-1zM18 6h5v1h-5zM3 7h1v1h-1zM13 7h1v1h-1zM17 7h2v1h-2zM22 7h1v1h-1zM1 8h1v2h-1zM3 8h2v1h-2zM10 8h1v3h-1zM12 8h4v1h-4zM18 8h5v1h-5zM3 9h1v2h-1zM5 9h2v1h-2zM16 9h1v1h-1zM18 9h1v1h-1zM22 9h1v1h-1zM0 10h1v1h-1zM6 10h1v1h-1zM14 10h2v1h-2zM18 10h5v1h-5zM2 11h2v1h-2zM5 11h1v1h-1zM9 11h2v1h-2zM12 11h2v1h-2zM18 11h1v1h-1zM22 11h1v1h-1z"/></svg></div>
<div style="left:310px;top:461px;width:106px;height:18px;border-top:1px solid #808080;border-left:1px solid #808080;border-right:1px solid #fff;border-bottom:1px solid #fff"></div>
<div class="t" style="left:312px;top:463px;width:90px;height:13px">运行时间: 0.00s<svg class="g" width="90" height="13"><path fill="#000" d="M1 1h1v1h-1zM5 1h5v1h-5zM14 1h1v1h-1zM17 1h5v1h-5zM32 1h1v2h-1zM38 1h1v1h-1zM41 1h6v1h-6zM2 2h1v2h-1zM13 2h1v1h-1zM24 2h4v1h-4zM39 2h1v1h-1zM46 2h1v9h-1zM12 3h1v1h-1zM24 3h1v3h-1zM27 3h8v1h-8zM37 3h1v9h-1zM62 3h3v1h-3zM74 3h3v1h-3zM80 3h3v1h-3zM4 4h7v1h-7zM15 4h1v1h-1zM27 4h1v2h-1zM32 4h1v7h-1zM40 4h4v1h-4zM61 4h1v6h-1zM65 4h1v6h-1zM73 4h1v6h-1zM77 4h1v6h-1zM79 4h1v6h-1zM83 4h1v6h-1zM0 5h3v1h-3zM6 5h1v2h-1zM14 5h1v1h-1zM16 5h7v1h-7zM29 5h1v1h-1zM40 5h1v1h-1zM43 5h1v1h-1zM49 5h1v1h-1zM2 6h1v4h-1zM8 6h1v1h-1zM13 6h2v1h-2zM20 6h1v5h-1zM24 6h4v1h-4zM30 6h1v2h-1zM40 6h4v1h-4zM85 6h4v1h-4zM5 7h1v1h-1zM9 7h1v1h-1zM12 7h1v1h-1zM14 7h1v5h-1zM24 7h1v3h-1zM27 7h1v3h-1zM40 7h1v2h-1zM43 7h1v2h-1zM84 7h1v1h-1zM4 8h5v1h-5zM10 8h1v2h-1zM85 8h3v1h-3zM5 9h1v1h-1zM40 9h4v1h-4zM49 9h1v1h-1zM88 9h1v1h-1zM1 10h1v1h-1zM3 10h1v1h-1zM24 10h4v1h-4zM62 10h3v1h-3zM68 10h1v1h-1zM74 10h3v1h-3zM80 10h3v1h-3zM84 10h4v1h-4zM0 11h1v1h-1zM4 11h7v1h-7zM18 11h3v1h-3zM30 11h3v1h-3zM44 11h3v1h-3z"/></svg></div>
<div style="left:417px;top:461px;width:237px;height:18px;border-top:1px solid #808080;border-left:1px solid #808080;border-right:1px solid #fff;border-bottom:1px solid #fff"></div>
<div class="t" style="left:419px;top:463px;width:48px;height:13px">开关量:A<svg class="g" width="48" height="13"><path fill="#000" d="M1 1h9v1h-9zM14 1h1v1h-1zM20 1h1v1h-1zM26 1h7v1h-7zM3 2h1v4h-1zM7 2h1v4h-1zM15 2h1v1h-1zM19 2h1v1h-1zM26 2h1v1h-1zM32 2h1v1h-1zM13 3h9v1h-9zM26 3h7v1h-7zM44 3h1v2h-1zM17 4h1v2h-1zM26 4h1v1h-1zM32 4h1v1h-1zM24 5h11v1h-11zM37 5h1v1h-1zM43 5h1v3h-1zM45 5h1v2h-1zM0 6h11v1h-11zM12 6h10v1h-10zM26 6h1v1h-1zM29 6h1v1h-1zM32 6h1v1h-1zM3 7h1v1h-1zM7 7h1v5h-1zM17 7h1v1h-1zM26 7h7v1h-7zM46 7h1v1h-1zM2 8h1v2h-1zM16 8h1v1h-1zM18 8h1v1h-1zM26 8h1v1h-1zM29 8h1v1h-1zM32 8h1v1h-1zM43 8h4v1h-4zM15 9h1v1h-1zM19 9h1v1h-1zM25 9h9v1h-9zM37 9h1v1h-1zM42 9h1v1h-1zM47 9h1v1h-1zM1 10h1v1h-1zM14 10h1v1h-1zM20 10h1v1h-1zM29 10h1v1h-1zM42 10h2v1h-2zM46 10h2v1h-2zM0 11h1v1h-1zM12 11h2v1h-2zM21 11h2v1h-2zM24 11h11v1h-11z"/></svg></div>
<div style="left:468px;top:465px;width:11px;height:11px;background:#808080;border-radius:50%"></div>
<div class="t" style="left:485px;top:463px;width:6px;height:13px">B<svg class="g" width="6" height="13"><path fill="#000" d="M0 3h4v1h-4zM1 4h1v2h-1zM4 4h1v2h-1zM1 6h3v1h-3zM1 7h1v3h-1zM4 7h1v3h-1zM0 10h4v1h-4z"/></svg></div>
<div style="left:492px;top:465px;width:11px;height:11px;background:#808080;border-radius:50%"></div>
<div class="t" style="left:509px;top:463px;width:6px;height:13px">C<svg class="g" width="6" height="13"><path fill="#000" d="M1 3h4v1h-4zM0 4h1v6h-1zM4 4h1v1h-1zM4 9h1v1h-1zM1 10h3v1h-3z"/></svg></div>
<div style="left:516px;top:465px;width:11px;height:11px;background:#808080;border-radius:50%"></div>
<div class="t" style="left:533px;top:463px;width:6px;height:13px">R<svg class="g" width="6" height="13"><path fill="#000" d="M0 3h4v1h-4zM1 4h1v2h-1zM4 4h1v2h-1zM1 6h3v1h-3zM1 7h1v3h-1zM3 7h1v1h-1zM4 8h1v2h-1zM0 10h2v1h-2zM4 10h2v1h-2z"/></svg></div>
<div style="left:540px;top:465px;width:11px;height:11px;background:#808080;border-radius:50%"></div>
<div class="t" style="left:557px;top:463px;width:6px;height:13px">a<svg class="g" width="6" height="13"><path fill="#000" d="M1 6h3v1h-3zM4 7h1v1h-1zM1 8h4v1h-4zM0 9h1v1h-1zM4 9h1v1h-1zM1 10h4v1h-4z"/></svg></div>
<div style="left:564px;top:465px;width:11px;height:11px;background:#808080;border-radius:50%"></div>
<div class="t" style="left:581px;top:463px;width:6px;height:13px">b<svg class="g" width="6" height="13"><path fill="#000" d="M0 3h2v1h-2zM1 4h1v2h-1zM1 6h3v1h-3zM1 7h1v3h-1zM4 7h1v3h-1zM0 10h1v1h-1zM2 10h2v1h-2z"/></svg></div>
<div style="left:588px;top:465px;width:11px;height:11px;background:#808080;border-radius:50%"></div>
<div class="t" style="left:605px;top:463px;width:6px;height:13px">c<svg class="g" width="6" height="13"><path fill="#000" d="M1 6h4v1h-4zM0 7h1v3h-1zM4 7h1v1h-1zM4 9h1v1h-1zM1 10h3v1h-3z"/></svg></div>
<div style="left:612px;top:465px;width:11px;height:11px;background:#808080;border-radius:50%"></div>
</body></html>
